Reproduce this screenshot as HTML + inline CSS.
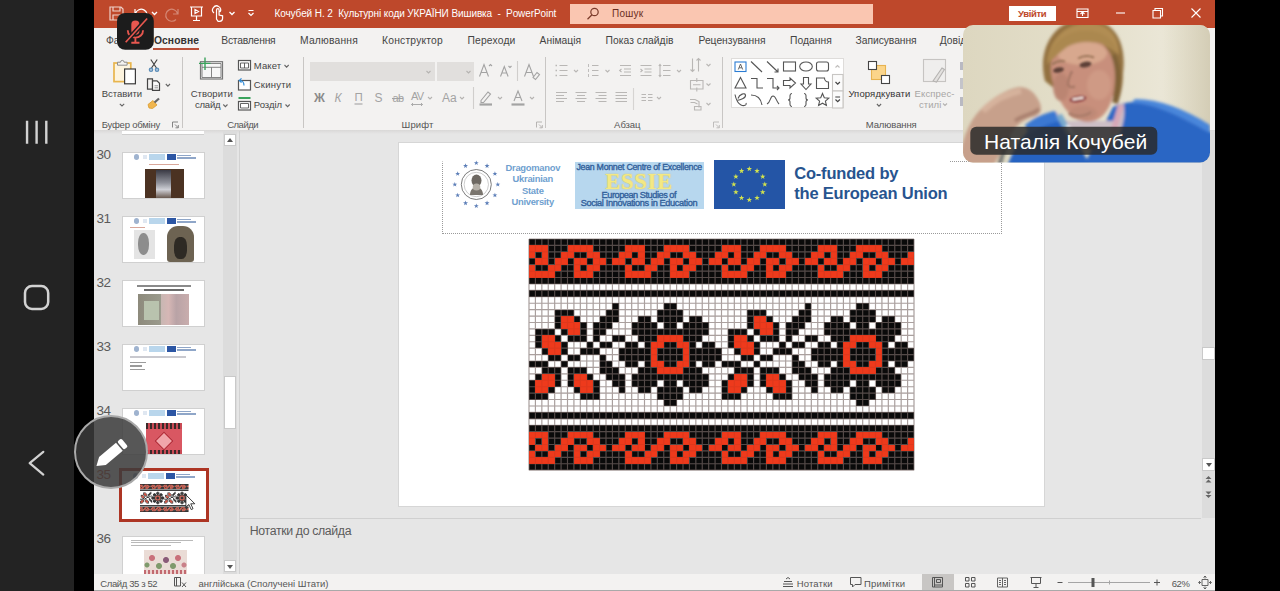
<!DOCTYPE html>
<html lang="uk">
<head>
<meta charset="utf-8">
<title>PowerPoint</title>
<style>
html,body{margin:0;padding:0}
body{width:1280px;height:591px;position:relative;overflow:hidden;background:#000;font-family:"Liberation Sans",sans-serif;font-size:11px;color:#444}
.a{position:absolute}
.t{position:absolute;white-space:nowrap;line-height:1}
svg{position:absolute;overflow:visible}
.sep{position:absolute;width:1px;background:#c8c6c4}
.gl{position:absolute;white-space:nowrap;line-height:1;font-size:9.5px;color:#555;top:120.1px}
.tab{position:absolute;white-space:nowrap;line-height:1;font-size:10.3px;color:#444;top:36.1px}
.num{position:absolute;white-space:nowrap;line-height:1;font-size:13.5px;letter-spacing:-.4px;color:#666;left:96.5px}
.th{position:absolute;left:122px;width:82.5px;height:47px;background:#fff;border:1px solid #d0d0d0;box-sizing:border-box;overflow:hidden}
.ch{position:absolute;width:5px;height:5px}
</style>
</head>
<body>
<!-- android nav bar -->
<div class="a" style="left:0;top:0;width:74px;height:591px;background:#232323"></div>
<svg style="left:0;top:0" width="74" height="591" viewBox="0 0 74 591" fill="none" stroke="#d2d2d2" stroke-width="2.2" stroke-linecap="round" stroke-linejoin="round">
<path d="M27.050 120.700V143.800M36.600 120.700V143.800M46.300 120.700V143.800" stroke-width="2.400" stroke-linecap="butt"/>
<rect x="25" y="286.1" width="23.2" height="22.8" rx="7" stroke-width="2.5"/>
<path d="M43.300 451.800L29.700 463.200L43.300 474.600"/>
</svg>
<!-- powerpoint window -->
<div class="a" style="left:94px;top:0;width:1121px;height:591px;background:#e6e6e6"></div>
<!-- title bar -->
<div class="a" style="left:94px;top:0;width:1121px;height:28px;background:#be482b"></div>
<div class="a" style="left:570px;top:4px;width:303px;height:20px;background:#fac6b1"></div>
<svg style="left:94px;top:0" width="1121" height="28" viewBox="94 0 1121 28" fill="none" stroke="#fff" stroke-width="1.2">
<!-- save -->
<path d="M110 7h11l2 2v11h-13zM113 7v4h7v-4M113 20v-5h7v5" opacity=".75"/>
<!-- undo -->
<path d="M135 9v5h5M135.500 13.500a6 6 0 1 1 1.500 6" />
<path d="M152 12l2.500 2.500l2.500-2.500" stroke-width="1.300"/>
<!-- redo (dim) -->
<path d="M178 9v5h-5M177.500 13.500a6 6 0 1 0-1.500 6" opacity=".35"/>
<!-- present -->
<path d="M190 7h13M191.500 7v9h10V7M196.500 16v4M193 20.500h7M195 9.500l3.500 2l-3.500 2z"/>
<!-- touch -->
<path d="M214 13a4 4 0 1 1 6-1M216.500 19v-9a1.300 1.300 0 0 1 2.600 0v5l3.500.8v2.500a3 3 0 0 1-3 3h-1.500z"/>
<path d="M229.500 12l2.500 2.500l2.500-2.500" stroke-width="1.300"/>
<!-- customize -->
<path d="M248.500 10.500h5M248.500 13l2.500 2.500l2.500-2.500" stroke-width="1.200"/>
<!-- search icon -->
<g stroke="#7a3a2a" stroke-width="1.200"><circle cx="594.500" cy="12" r="3.700"/><path d="M592 14.800l-4.500 4.400"/></g>
<!-- window controls -->
<path d="M1077 9h11v8.500h-11zM1077 11.500h11M1082.500 16v-3.500M1080.500 14l2-2l2 2" stroke-width="1.100"/>
<path d="M1116 13h9" stroke-width="1.100"/>
<path d="M1153 10.500h7.500v7.500H1153zM1155 10.500V8.500h7.500V16h-2" stroke-width="1.100"/>
<path d="M1191.500 8.500l9 9M1200.500 8.500l-9 9" stroke-width="1.100"/>
</svg>
<div class="t" style="left:274.5px;top:9px;font-size:10px;color:#fff;word-spacing:0px;letter-spacing:-0.092px" id="title">Кочубей Н. 2&nbsp; Культурні коди УКРАЇНИ Вишивка&nbsp; -&nbsp; PowerPoint</div>
<div class="t" style="left:612px;top:8.7px;font-size:10px;color:#6b2e22;letter-spacing:0.229px" id="search">Пошук</div>
<div class="a" style="left:1009px;top:6px;width:46.500px;height:15px;background:#fff"></div>
<div class="t" style="left:1018px;top:9px;font-size:9.5px;font-weight:bold;color:#be482b;letter-spacing:-0.363px" id="login">Увійти</div>
<!-- tabs + ribbon -->
<div class="a" style="left:94px;top:28px;width:1121px;height:102px;background:#f3f2f1"></div>
<div class="a" style="left:94px;top:130px;width:1121px;height:4px;background:linear-gradient(#d9d8d7,#e6e6e6)"></div>
<div class="tab" style="left:106px;letter-spacing:-0.082px" id="tb0">Файл</div>
<div class="tab" style="left:154px;font-weight:bold;color:#333;letter-spacing:0.067px" id="tb1">Основне</div>
<div class="a" style="left:153px;top:48px;width:46px;height:2px;background:#b9503a"></div>
<div class="tab" style="left:221.25px;letter-spacing:-0.202px" id="tb2">Вставлення</div>
<div class="tab" style="left:300px;letter-spacing:0.201px" id="tb3">Малювання</div>
<div class="tab" style="left:382px;letter-spacing:0.207px" id="tb4">Конструктор</div>
<div class="tab" style="left:467.5px;letter-spacing:0.168px" id="tb5">Переходи</div>
<div class="tab" style="left:539.5px;letter-spacing:0.041px" id="tb6">Анімація</div>
<div class="tab" style="left:605.5px;letter-spacing:0.042px" id="tb7">Показ слайдів</div>
<div class="tab" style="left:698.5px;letter-spacing:-0.010px" id="tb8">Рецензування</div>
<div class="tab" style="left:790px;letter-spacing:0.058px" id="tb9">Подання</div>
<div class="tab" style="left:855.6px;letter-spacing:-0.055px" id="tb10">Записування</div>
<div class="tab" style="left:939.8px;letter-spacing:-0.050px" id="tb11">Довідка</div>
<!-- clipboard group -->
<svg style="left:94px;top:53px" width="220" height="77" viewBox="94 53 220 77" fill="none" stroke-width="1.200">
<rect x="114" y="63" width="16.800" height="18.600" stroke="#e8b54d" stroke-width="1.700" fill="#fdf4df"/>
<path d="M117.500 65.200v-3h3a1.800 1.800 0 0 1 3.600 0h3v3z" stroke="#8f8f8f" fill="#f3f2f1" stroke-width="1"/>
<rect x="124.600" y="69" width="10.800" height="14.800" fill="#fff" stroke="#3b3b3b" stroke-width="1.200"/>
<path d="M119.800 103.800l2.200 2.200l2.200-2.200" stroke="#666" stroke-width="1.100"/>
<!-- scissors -->
<path d="M150.800 59.500l5.700 8.500M157.200 59.500l-5.700 8.500" stroke="#444"/>
<circle cx="151" cy="69.800" r="1.700" stroke="#5b8db8" fill="#a9c4dc"/><circle cx="157" cy="69.800" r="1.700" stroke="#5b8db8" fill="#a9c4dc"/>
<!-- copy -->
<path d="M147.500 78.800h5v10.300h-5z" stroke="#444" fill="#f3f2f1"/><path d="M152.500 80.800h4.500l2.500 2.500v7h-7z" stroke="#444" fill="#fbfbfb"/>
<path d="M154.500 85.800h3.500M154.500 87.800h3.500" stroke="#777" stroke-width=".8"/>
<path d="M165.800 84l2.100 2.100l2.100-2.100" stroke="#666" stroke-width="1.100"/>
<!-- format painter -->
<path d="M148 104.500l5-4l4 4.500l-4.500 3.500l-3.500-.5z" fill="#f0b64f" stroke="#d99a2b" stroke-width=".8"/>
<path d="M154.500 102.500l4.500-4" stroke="#666" stroke-width="2.200"/>
<!-- launcher -->
<path d="M172.500 127.500v-5.500h5.500M175 124.500l3 3M178.300 125v2.800h-2.800" stroke="#777" stroke-width=".9"/>
<!-- new slide -->
<rect x="200.500" y="61.700" width="22" height="17.300" stroke="#777" fill="#f7f7f7"/>
<path d="M202 63.500h19v14h-19zM202 67.300h19M211.500 67.300v10.200" stroke="#777" stroke-width=".9"/>
<path d="M205 57.500v12.500M199 63.400h11.500" stroke="#3aa35c" stroke-width="1.400"/>
<path d="M223.300 104.500l2.100 2.100l2.100-2.100" stroke="#666" stroke-width="1.100"/>
<!-- layout -->
<rect x="238.500" y="60.500" width="12" height="9.500" stroke="#555" fill="#fff"/>
<path d="M240.500 63h8v5h-8zM244.500 63v5" stroke="#555" stroke-width=".9"/>
<path d="M284.500 65l2.100 2.100l2.100-2.100" stroke="#666" stroke-width="1.100"/>
<!-- reset -->
<rect x="238.500" y="80.500" width="12" height="9.500" stroke="#555" fill="#fff"/>
<path d="M244 85.500c0-3.500-1.800-5-4.500-5M241.500 78.300l-2.200 2.200l2.200 2.200" stroke="#2f8bd8" stroke-width="1.200"/>
<!-- section -->
<path d="M238.500 98h12" stroke="#3aa35c" stroke-width="2"/>
<rect x="238.500" y="101.500" width="12" height="8.500" stroke="#555" fill="#fff"/>
<path d="M240.500 103.500h8v4.500h-8z" stroke="#555" stroke-width=".9"/>
<path d="M285.500 104.500l2.100 2.100l2.100-2.100" stroke="#666" stroke-width="1.100"/>
</svg>
<div class="t" style="left:101.7px;top:88.5px;font-size:9.5px;letter-spacing:-0.030px" id="r_paste">Вставити</div>
<div class="gl" style="left:101.7px;letter-spacing:-0.205px" id="g_clip">Буфер обміну</div>
<div class="sep" style="left:181.500px;top:57px;height:71px"></div>
<div class="t" style="left:190.7px;top:88.5px;font-size:9.5px;letter-spacing:0.052px" id="r_new1">Створити</div>
<div class="t" style="left:195px;top:100.3px;font-size:9.5px;letter-spacing:-0.227px" id="r_new2">слайд</div>
<div class="t" style="left:253.8px;top:61.1px;font-size:9.5px;letter-spacing:0.122px" id="r_lay">Макет</div>
<div class="t" style="left:253.8px;top:80.3px;font-size:9.5px;letter-spacing:0.217px" id="r_res">Скинути</div>
<div class="t" style="left:253.8px;top:100.3px;font-size:9.5px;letter-spacing:-0.026px" id="r_sec">Розділ</div>
<div class="gl" style="left:227.2px;letter-spacing:-0.491px" id="g_sl">Слайди</div>
<div class="sep" style="left:303px;top:57px;height:71px"></div>
<!-- font group -->
<div class="a" style="left:310px;top:62px;width:124.500px;height:19px;background:#e1dfdd"></div>
<div class="a" style="left:437px;top:62px;width:37px;height:19px;background:#e1dfdd"></div>
<svg style="left:304px;top:53px" width="420" height="77" viewBox="304 53 420 77" fill="none" stroke="#a3a3a3" stroke-width="1.100">
<path d="M426.500 71l2 2l2-2M466.500 71l2 2l2-2" stroke="#b5b3b1"/>
<!-- A^ Av -->
<path d="M479.500 76.500l4.500-12l4.500 12M481 72.500h6M489 66l1.500-1.500l1.500 1.500"/>
<path d="M500.500 76.500l3.800-10l3.800 10M501.800 73h5M508.500 66l1.500 1.500l1.500-1.500"/>
<path d="M517.500 61v20" stroke="#d0cecc"/>
<path d="M524.500 76.500l4.500-12l4.500 12M526 72.500h6M533 77.500l4-5l2.500 2l-4 5z"/>
<!-- underline for П -->
<path d="M354.500 104h8"/>
<!-- strike ab -->
<path d="M392 98.500h11"/>
<!-- AV arrows -->
<path d="M411.500 104.500h11M413 103l-1.500 1.500l1.500 1.500M421 103l1.500 1.500l-1.500 1.500" stroke-width=".9"/>
<path d="M428 97l2 2l2-2M460 97l2 2l2-2M498 97l2 2l2-2M530 97l2 2l2-2" stroke="#b5b3b1"/>
<path d="M473.500 87v22" stroke="#d0cecc"/>
<!-- highlighter -->
<path d="M481 100.500l7-8.500l2.500 2l-7 8.500h-2.500z"/>
<path d="M479.500 104.500h12.500" stroke-width="2.200"/>
<!-- font color A -->
<path d="M514 101l4-10l4 10M515.300 97.500h5.400"/>
<path d="M511.500 104.500h13" stroke-width="2.200"/>
<path d="M536.500 127.500v-5.500h5.500M539 124.500l3 3M542.300 125v2.800h-2.800" stroke="#b0aeac" stroke-width=".9"/>
<!-- paragraph: bullets -->
<g stroke="#b9b7b5">
<path d="M555.500 65.500h1.500M555.500 70.500h1.500M555.500 75.500h1.500" stroke-width="1.600"/>
<path d="M559.500 65.500h8M559.500 70.500h8M559.500 75.500h8"/>
<path d="M574 70l2 2l2-2"/>
<path d="M588.500 64v3M588.500 69v3M588.500 74v3" stroke-width=".9"/>
<path d="M592 65.500h6.500M592 70.500h6.500M592 75.500h6.500"/>
<path d="M605.500 70l2 2l2-2"/>
<path d="M620 65.500h11M624 69h7M624 72h7M620 75.500h11M621.500 69l-1.800 1.500l1.800 1.500"/>
<path d="M640.500 65.500h11M644.500 69h7M644.500 72h7M640.500 75.500h11M640.500 69l1.800 1.500l-1.800 1.500"/>
<path d="M663 65.500h7.500M663 70.500h7.500M663 75.500h7.500M660 64.500v12M658.800 66l1.200-1.500l1.200 1.500M658.800 75l1.200 1.500l1.200-1.500"/>
<path d="M677 70l2 2l2-2"/>
<!-- text direction -->
<path d="M692.500 58.500v13M690.500 69.500l2 2l2-2M698.500 71.500v-13M696.500 60.500l2-2l2 2"/>
<path d="M706.500 64l2 2l2-2M706.500 83.500l2 2l2-2M706.500 103l2 2l2-2"/>
<!-- align text -->
<path d="M690.500 80.500h12.500v8.500h-12.500zM696.800 78v4M696.800 87.500v4M693 84.800h7.500"/>
<!-- smartart -->
<path d="M690 99.500h5l4 2v6M690.500 102.500h4l3 1.500M694.500 106.500h6.500v3.500h-6.500z"/>
<!-- align row -->
<path d="M556 92.500h11M556 95.500h8M556 98.500h11M556 101.500h8"/>
<path d="M575.500 92.500h11M577 95.500h8M575.500 98.500h11M577 101.500h8"/>
<path d="M595.500 92.500h11M598.500 95.500h8M595.500 98.500h11M598.500 101.500h8"/>
<path d="M615.500 92.500h11.500M615.500 95.500h11.500M615.500 98.500h11.500M615.500 101.500h11.500"/>
<path d="M633.500 88v22" stroke="#d6d4d2"/>
<path d="M641.500 94.500h4.500M641.500 97.500h4.500M641.500 100.500h4.500M648 94.500h4.500M648 97.500h4.500M648 100.500h4.500"/>
<path d="M657 97l2 2l2-2"/>
<path d="M713.500 127.500v-5.500h5.500M716 124.500l3 3M719.300 125v2.800h-2.800" stroke-width=".9"/>
</g>
</svg>
<div class="t" style="left:314px;top:92px;font-size:12px;font-weight:bold;color:#8a8a8a">Ж</div>
<div class="t" style="left:334.500px;top:92px;font-size:12px;font-style:italic;color:#a3a3a3">К</div>
<div class="t" style="left:354.500px;top:92px;font-size:11.500px;color:#a3a3a3">П</div>
<div class="t" style="left:374.500px;top:92px;font-size:12px;color:#a3a3a3">S</div>
<div class="t" style="left:392.500px;top:93px;font-size:11px;color:#a3a3a3;letter-spacing:-.5px">ab</div>
<div class="t" style="left:411px;top:91px;font-size:11px;color:#a3a3a3;letter-spacing:-.8px">AV</div>
<div class="t" style="left:442px;top:92px;font-size:12px;color:#a3a3a3">Aa</div>
<div class="gl" style="left:401.6px;letter-spacing:0.127px" id="g_font">Шрифт</div>
<div class="sep" style="left:545px;top:57px;height:71px"></div>
<div class="gl" style="left:614.1px;letter-spacing:-0.051px" id="g_par">Абзац</div>
<div class="sep" style="left:722px;top:57px;height:71px"></div>
<!-- drawing group -->
<div class="a" style="left:731px;top:57.500px;width:112.500px;height:50.500px;background:#fff;border:1px solid #dedcda;box-sizing:border-box"></div>
<svg style="left:724px;top:53px" width="240" height="77" viewBox="724 53 240 77" fill="none" stroke="#555" stroke-width="1.100">
<!-- row1 -->
<rect x="735" y="62" width="11" height="9.500" stroke="#2b7cd3"/>
<path d="M738.300 69.500l2.200-5.500l2.200 5.500M739.200 67.800h2.600" stroke-width=".9"/>
<path d="M751 61.500l11 10.500"/>
<path d="M767 61.500l11 10.500M778 68.500v3.500h-3.500"/>
<rect x="783.500" y="62" width="12" height="9"/>
<ellipse cx="806" cy="66.500" rx="6.300" ry="4.500"/>
<rect x="816.500" y="62" width="12" height="9" rx="2"/>
<!-- row2 -->
<path d="M740.500 77.500l5.500 10.500h-11z"/>
<path d="M751 78.500h6v9.500h6"/>
<path d="M767 78.500h6v9.500h6M777 86l2 2l-2 2"/>
<path d="M783.500 80.500h6.500v-2.500l5.500 5l-5.500 5v-2.500h-6.500z"/>
<path d="M803.500 77.500h5v6.500h2.500l-5 5.500l-5-5.500h2.500z"/>
<path d="M816.500 78h8a4 4 0 0 0 4 4v6.500h-12z"/>
<!-- row3 -->
<path d="M735 94.500c1 5 3 9 6 10.500s6 0 5-2M736.500 100.500c5-.5 9.500-3 9-5.500s-6-1-7.500 3.500"/>
<path d="M751 95c6 0 10 4 11 10"/>
<path d="M767 104c4-2 3-8 6-8s3 5 6 8"/>
<path d="M792 93.500c-2.500 0-2 3-2 4.500s-1 2-2 2c1 0 2 .5 2 2s-.5 4.500 2 4.500"/>
<path d="M804 93.500c2.500 0 2 3 2 4.500s1 2 2 2c-1 0-2 .5-2 2s.5 4.500-2 4.500"/>
<path d="M822.500 93.500l1.800 4.200l4.500.4l-3.400 3l1 4.400l-3.900-2.300l-3.900 2.300l1-4.400l-3.400-3l4.500-.4z"/>
<!-- gallery scroll -->
<path d="M835.500 67.500l2-2l2 2" stroke="#c0bebc"/>
<rect x="832.500" y="74.500" width="10.500" height="16.500" stroke="#c8c6c4" fill="#fbfbfb"/>
<rect x="832.500" y="91" width="10.500" height="17" stroke="#c8c6c4" fill="#fbfbfb"/>
<path d="M835.500 82l2.200 2.200l2.200-2.200M835.500 99.500l2.200 2.200l2.200-2.200M835.300 97h4.800" stroke="#444" stroke-width="1.200"/>
<!-- arrange -->
<rect x="871.500" y="65.500" width="14" height="14" fill="#fbd58a" stroke="#e7b350"/>
<rect x="868.500" y="61.500" width="8" height="8" fill="#fff" stroke="#444"/>
<rect x="881.500" y="75.500" width="8" height="8" fill="#fff" stroke="#444"/>
<path d="M876.900 104l2.100 2.100l2.100-2.100" stroke="#666" stroke-width="1.100"/>
<!-- quick styles -->
<rect x="923.500" y="59.500" width="22" height="22" stroke="#c6c4c2" fill="#efeeed"/>
<path d="M933 81l9-13l2.500 1.500l-8 12.500z" stroke="#b5b3b1" fill="#e3e1df"/>
<path d="M943 103.500l2 2l2-2" stroke="#b5b3b1"/>
</svg>
<div class="t" style="left:848.4px;top:88.5px;font-size:9.5px;color:#333;letter-spacing:0.126px" id="r_arr">Упорядкувати</div>
<div class="t" style="left:914.6px;top:88.5px;font-size:9.5px;color:#a8a6a4;letter-spacing:0.127px" id="r_q1">Експрес-</div>
<div class="t" style="left:919px;top:100.3px;font-size:9.5px;color:#a8a6a4;letter-spacing:0.067px" id="r_q2">стилі</div>
<div class="a" style="left:959.500px;top:62px;width:4px;height:8px;background:#b9b9c2"></div><div class="a" style="left:960px;top:78px;width:4px;height:11px;background:#c4c4ca"></div><div class="a" style="left:959.500px;top:97px;width:4px;height:9px;background:#b9b9c2"></div>
<div class="gl" style="left:865.8px;letter-spacing:-0.116px" id="g_draw">Малювання</div>
<!-- thumbnail pane -->
<div class="a" style="left:239px;top:131px;width:1px;height:443px;background:#d2d2d2"></div>
<div class="a" style="left:222.500px;top:131px;width:14px;height:443px;background:#dcdcdc"></div>
<div class="a" style="left:122px;top:131px;width:82px;height:3px;background:#fff;border-bottom:1px solid #cfcfcf"></div>
<div class="num" style="top:148.0px;color:#5a5a5a">30</div>
<div class="num" style="top:212.0px;color:#5a5a5a">31</div>
<div class="num" style="top:276.0px;color:#5a5a5a">32</div>
<div class="num" style="top:340.0px;color:#5a5a5a">33</div>
<div class="num" style="top:404.0px;color:#5a5a5a">34</div>
<div class="num" style="top:468.0px;color:#b5482e">35</div>
<div class="num" style="top:532.0px;color:#5a5a5a">36</div>
<div class="th" style="top:151.5px;"><div class="a" style="left:11px;top:1.500px;width:5px;height:5.500px;border-radius:50%;background:#9fb3cf"></div><div class="a" style="left:19.500px;top:2px;width:4px;height:4.500px;background:#dfe7f1"></div><div class="a" style="left:26px;top:1px;width:15.500px;height:6px;background:#b9d6ec"></div><div class="a" style="left:43.500px;top:1px;width:9px;height:6px;background:#2c56a4"></div><div class="a" style="left:54px;top:2px;width:14px;height:1.500px;background:#8fa6c8"></div><div class="a" style="left:54px;top:4.500px;width:19px;height:1.500px;background:#8fa6c8"></div><div class="a" style="left:26px;top:11px;width:30px;height:1.500px;background:#d9a79a"></div><div class="a" style="left:21.500px;top:16.500px;width:39px;height:29px;background:#4b3222"></div><div class="a" style="left:33px;top:17px;width:15px;height:28px;background:linear-gradient(#3a3a44,#8d8f98 45%,#cfd0d6 70%,#6a5a50)"></div></div>
<div class="th" style="top:215.5px;"><div class="a" style="left:11px;top:1.500px;width:5px;height:5.500px;border-radius:50%;background:#9fb3cf"></div><div class="a" style="left:19.500px;top:2px;width:4px;height:4.500px;background:#dfe7f1"></div><div class="a" style="left:26px;top:1px;width:15.500px;height:6px;background:#b9d6ec"></div><div class="a" style="left:43.500px;top:1px;width:9px;height:6px;background:#2c56a4"></div><div class="a" style="left:54px;top:2px;width:14px;height:1.500px;background:#8fa6c8"></div><div class="a" style="left:54px;top:4.500px;width:19px;height:1.500px;background:#8fa6c8"></div><div class="a" style="left:7px;top:10px;width:15px;height:1.500px;background:#d9a79a"></div><div class="a" style="left:10.500px;top:13px;width:21px;height:29px;background:#e4e4e4"></div><div class="a" style="left:15px;top:16px;width:11px;height:22px;border-radius:45%;background:#8d8d8d"></div><div class="a" style="left:44px;top:9.500px;width:27px;height:36px;border-radius:11px 11px 3px 3px;background:#6d6352"></div><div class="a" style="left:51px;top:20px;width:13px;height:22px;border-radius:40%;background:#2e2a24"></div></div>
<div class="th" style="top:279.5px;"><div class="a" style="left:14px;top:4px;width:54px;height:2px;background:#8a8a8a"></div><div class="a" style="left:21px;top:8.500px;width:40px;height:2px;background:#6a6a6a"></div><div class="a" style="left:15px;top:13px;width:51px;height:31px;background:linear-gradient(90deg,#8d8a7c 0,#9a9a8c 44%,#c9b7b3 46%,#d6b7b5 60%,#b9a3a6 75%,#c9adad 100%)"></div><div class="a" style="left:21px;top:20px;width:15px;height:19px;background:#b9c3ae"></div></div>
<div class="th" style="top:343.5px;"><div class="a" style="left:11px;top:1.500px;width:5px;height:5.500px;border-radius:50%;background:#9fb3cf"></div><div class="a" style="left:19.500px;top:2px;width:4px;height:4.500px;background:#dfe7f1"></div><div class="a" style="left:26px;top:1px;width:15.500px;height:6px;background:#b9d6ec"></div><div class="a" style="left:43.500px;top:1px;width:9px;height:6px;background:#2c56a4"></div><div class="a" style="left:54px;top:2px;width:14px;height:1.500px;background:#8fa6c8"></div><div class="a" style="left:54px;top:4.500px;width:19px;height:1.500px;background:#8fa6c8"></div><div class="a" style="left:7px;top:11.500px;width:56px;height:1.500px;background:#c9c9cf"></div><div class="a" style="left:7px;top:17px;width:16px;height:1.500px;background:#9a9a9a"></div><div class="a" style="left:7px;top:20.500px;width:12px;height:1.500px;background:#9a9a9a"></div><div class="a" style="left:7px;top:24px;width:15px;height:1.500px;background:#9a9a9a"></div></div>
<div class="th" style="top:407.5px;"><div class="a" style="left:11px;top:1.500px;width:5px;height:5.500px;border-radius:50%;background:#9fb3cf"></div><div class="a" style="left:19.500px;top:2px;width:4px;height:4.500px;background:#dfe7f1"></div><div class="a" style="left:26px;top:1px;width:15.500px;height:6px;background:#b9d6ec"></div><div class="a" style="left:43.500px;top:1px;width:9px;height:6px;background:#2c56a4"></div><div class="a" style="left:54px;top:2px;width:14px;height:1.500px;background:#8fa6c8"></div><div class="a" style="left:54px;top:4.500px;width:19px;height:1.500px;background:#8fa6c8"></div><div class="a" style="left:22.500px;top:14px;width:36.500px;height:32px;background:#d95762"></div><div class="a" style="left:22.500px;top:14px;width:36.500px;height:6px;background:repeating-linear-gradient(90deg,#3a2a2a 0 2px,#c94a55 2px 4px)"></div><div class="a" style="left:31px;top:22px;width:20px;height:20px;transform:rotate(45deg) scale(.7);background:#f0a5aa;border:2px solid #b8303c;box-sizing:border-box"></div><div class="a" style="left:22.500px;top:41px;width:36.500px;height:5px;background:repeating-linear-gradient(90deg,#3a2a2a 0 2px,#c94a55 2px 4px)"></div></div>
<div class="a" style="left:119px;top:468.3px;width:90px;height:54px;border:3.5px solid #ad3524;box-sizing:border-box;background:#fff"></div><div class="th" style="top:471.500px;border:none"><div class="a" style="left:11px;top:1.500px;width:5px;height:5.500px;border-radius:50%;background:#9fb3cf"></div><div class="a" style="left:19.500px;top:2px;width:4px;height:4.500px;background:#dfe7f1"></div><div class="a" style="left:26px;top:1px;width:15.500px;height:6px;background:#b9d6ec"></div><div class="a" style="left:43.500px;top:1px;width:9px;height:6px;background:#2c56a4"></div><div class="a" style="left:54px;top:2px;width:14px;height:1.500px;background:#8fa6c8"></div><div class="a" style="left:54px;top:4.500px;width:19px;height:1.500px;background:#8fa6c8"></div></div><svg style="position:absolute;left:139.5px;top:484px" width="48.5" height="28" viewBox="0 0 60 36" preserveAspectRatio="none" shape-rendering="auto"><rect width="60" height="36" fill="#fff"/><rect x="0" y="0" width="60" height="1" fill="#0a0a0a"/><rect x="3" y="1" width="3" height="1" fill="#0a0a0a"/><rect x="10" y="1" width="5" height="1" fill="#0a0a0a"/><rect x="18" y="1" width="3" height="1" fill="#0a0a0a"/><rect x="25" y="1" width="5" height="1" fill="#0a0a0a"/><rect x="33" y="1" width="3" height="1" fill="#0a0a0a"/><rect x="40" y="1" width="5" height="1" fill="#0a0a0a"/><rect x="48" y="1" width="3" height="1" fill="#0a0a0a"/><rect x="55" y="1" width="5" height="1" fill="#0a0a0a"/><rect x="1" y="2" width="1" height="1" fill="#0a0a0a"/><rect x="3" y="2" width="2" height="1" fill="#0a0a0a"/><rect x="7" y="2" width="2" height="1" fill="#0a0a0a"/><rect x="11" y="2" width="3" height="1" fill="#0a0a0a"/><rect x="16" y="2" width="1" height="1" fill="#0a0a0a"/><rect x="18" y="2" width="2" height="1" fill="#0a0a0a"/><rect x="22" y="2" width="2" height="1" fill="#0a0a0a"/><rect x="26" y="2" width="3" height="1" fill="#0a0a0a"/><rect x="31" y="2" width="1" height="1" fill="#0a0a0a"/><rect x="33" y="2" width="2" height="1" fill="#0a0a0a"/><rect x="37" y="2" width="2" height="1" fill="#0a0a0a"/><rect x="41" y="2" width="3" height="1" fill="#0a0a0a"/><rect x="46" y="2" width="1" height="1" fill="#0a0a0a"/><rect x="48" y="2" width="2" height="1" fill="#0a0a0a"/><rect x="52" y="2" width="2" height="1" fill="#0a0a0a"/><rect x="56" y="2" width="3" height="1" fill="#0a0a0a"/><rect x="0" y="3" width="1" height="1" fill="#0a0a0a"/><rect x="3" y="3" width="1" height="1" fill="#0a0a0a"/><rect x="6" y="3" width="1" height="1" fill="#0a0a0a"/><rect x="9" y="3" width="1" height="1" fill="#0a0a0a"/><rect x="12" y="3" width="1" height="1" fill="#0a0a0a"/><rect x="15" y="3" width="1" height="1" fill="#0a0a0a"/><rect x="18" y="3" width="1" height="1" fill="#0a0a0a"/><rect x="21" y="3" width="1" height="1" fill="#0a0a0a"/><rect x="24" y="3" width="1" height="1" fill="#0a0a0a"/><rect x="27" y="3" width="1" height="1" fill="#0a0a0a"/><rect x="30" y="3" width="1" height="1" fill="#0a0a0a"/><rect x="33" y="3" width="1" height="1" fill="#0a0a0a"/><rect x="36" y="3" width="1" height="1" fill="#0a0a0a"/><rect x="39" y="3" width="1" height="1" fill="#0a0a0a"/><rect x="42" y="3" width="1" height="1" fill="#0a0a0a"/><rect x="45" y="3" width="1" height="1" fill="#0a0a0a"/><rect x="48" y="3" width="1" height="1" fill="#0a0a0a"/><rect x="51" y="3" width="1" height="1" fill="#0a0a0a"/><rect x="54" y="3" width="1" height="1" fill="#0a0a0a"/><rect x="57" y="3" width="1" height="1" fill="#0a0a0a"/><rect x="1" y="4" width="2" height="1" fill="#0a0a0a"/><rect x="5" y="4" width="2" height="1" fill="#0a0a0a"/><rect x="8" y="4" width="1" height="1" fill="#0a0a0a"/><rect x="11" y="4" width="4" height="1" fill="#0a0a0a"/><rect x="16" y="4" width="2" height="1" fill="#0a0a0a"/><rect x="20" y="4" width="2" height="1" fill="#0a0a0a"/><rect x="23" y="4" width="1" height="1" fill="#0a0a0a"/><rect x="26" y="4" width="4" height="1" fill="#0a0a0a"/><rect x="31" y="4" width="2" height="1" fill="#0a0a0a"/><rect x="35" y="4" width="2" height="1" fill="#0a0a0a"/><rect x="38" y="4" width="1" height="1" fill="#0a0a0a"/><rect x="41" y="4" width="4" height="1" fill="#0a0a0a"/><rect x="46" y="4" width="2" height="1" fill="#0a0a0a"/><rect x="50" y="4" width="2" height="1" fill="#0a0a0a"/><rect x="53" y="4" width="1" height="1" fill="#0a0a0a"/><rect x="56" y="4" width="4" height="1" fill="#0a0a0a"/><rect x="4" y="5" width="3" height="1" fill="#0a0a0a"/><rect x="10" y="5" width="5" height="1" fill="#0a0a0a"/><rect x="19" y="5" width="3" height="1" fill="#0a0a0a"/><rect x="25" y="5" width="5" height="1" fill="#0a0a0a"/><rect x="34" y="5" width="3" height="1" fill="#0a0a0a"/><rect x="40" y="5" width="5" height="1" fill="#0a0a0a"/><rect x="49" y="5" width="3" height="1" fill="#0a0a0a"/><rect x="55" y="5" width="5" height="1" fill="#0a0a0a"/><rect x="0" y="6" width="60" height="1" fill="#0a0a0a"/><rect x="0" y="8" width="60" height="1" fill="#0a0a0a"/><rect x="13" y="10" width="1" height="1" fill="#0a0a0a"/><rect x="21" y="10" width="2" height="1" fill="#0a0a0a"/><rect x="43" y="10" width="1" height="1" fill="#0a0a0a"/><rect x="51" y="10" width="2" height="1" fill="#0a0a0a"/><rect x="4" y="11" width="3" height="1" fill="#0a0a0a"/><rect x="12" y="11" width="2" height="1" fill="#0a0a0a"/><rect x="20" y="11" width="4" height="1" fill="#0a0a0a"/><rect x="34" y="11" width="3" height="1" fill="#0a0a0a"/><rect x="42" y="11" width="2" height="1" fill="#0a0a0a"/><rect x="50" y="11" width="4" height="1" fill="#0a0a0a"/><rect x="4" y="12" width="1" height="1" fill="#0a0a0a"/><rect x="7" y="12" width="1" height="1" fill="#0a0a0a"/><rect x="11" y="12" width="3" height="1" fill="#0a0a0a"/><rect x="17" y="12" width="2" height="1" fill="#0a0a0a"/><rect x="20" y="12" width="4" height="1" fill="#0a0a0a"/><rect x="25" y="12" width="2" height="1" fill="#0a0a0a"/><rect x="34" y="12" width="1" height="1" fill="#0a0a0a"/><rect x="37" y="12" width="1" height="1" fill="#0a0a0a"/><rect x="41" y="12" width="3" height="1" fill="#0a0a0a"/><rect x="47" y="12" width="2" height="1" fill="#0a0a0a"/><rect x="50" y="12" width="4" height="1" fill="#0a0a0a"/><rect x="55" y="12" width="2" height="1" fill="#0a0a0a"/><rect x="4" y="13" width="1" height="1" fill="#0a0a0a"/><rect x="8" y="13" width="1" height="1" fill="#0a0a0a"/><rect x="10" y="13" width="3" height="1" fill="#0a0a0a"/><rect x="16" y="13" width="4" height="1" fill="#0a0a0a"/><rect x="21" y="13" width="2" height="1" fill="#0a0a0a"/><rect x="24" y="13" width="4" height="1" fill="#0a0a0a"/><rect x="34" y="13" width="1" height="1" fill="#0a0a0a"/><rect x="38" y="13" width="1" height="1" fill="#0a0a0a"/><rect x="40" y="13" width="3" height="1" fill="#0a0a0a"/><rect x="46" y="13" width="4" height="1" fill="#0a0a0a"/><rect x="51" y="13" width="2" height="1" fill="#0a0a0a"/><rect x="54" y="13" width="4" height="1" fill="#0a0a0a"/><rect x="1" y="14" width="3" height="1" fill="#0a0a0a"/><rect x="5" y="14" width="1" height="1" fill="#0a0a0a"/><rect x="8" y="14" width="1" height="1" fill="#0a0a0a"/><rect x="10" y="14" width="2" height="1" fill="#0a0a0a"/><rect x="16" y="14" width="12" height="1" fill="#0a0a0a"/><rect x="31" y="14" width="3" height="1" fill="#0a0a0a"/><rect x="35" y="14" width="1" height="1" fill="#0a0a0a"/><rect x="38" y="14" width="1" height="1" fill="#0a0a0a"/><rect x="40" y="14" width="2" height="1" fill="#0a0a0a"/><rect x="46" y="14" width="12" height="1" fill="#0a0a0a"/><rect x="1" y="15" width="1" height="1" fill="#0a0a0a"/><rect x="4" y="15" width="1" height="1" fill="#0a0a0a"/><rect x="6" y="15" width="3" height="1" fill="#0a0a0a"/><rect x="10" y="15" width="1" height="1" fill="#0a0a0a"/><rect x="13" y="15" width="2" height="1" fill="#0a0a0a"/><rect x="17" y="15" width="3" height="1" fill="#0a0a0a"/><rect x="24" y="15" width="3" height="1" fill="#0a0a0a"/><rect x="31" y="15" width="1" height="1" fill="#0a0a0a"/><rect x="34" y="15" width="1" height="1" fill="#0a0a0a"/><rect x="36" y="15" width="3" height="1" fill="#0a0a0a"/><rect x="40" y="15" width="1" height="1" fill="#0a0a0a"/><rect x="43" y="15" width="2" height="1" fill="#0a0a0a"/><rect x="47" y="15" width="3" height="1" fill="#0a0a0a"/><rect x="54" y="15" width="3" height="1" fill="#0a0a0a"/><rect x="1" y="16" width="1" height="1" fill="#0a0a0a"/><rect x="5" y="16" width="1" height="1" fill="#0a0a0a"/><rect x="9" y="16" width="1" height="1" fill="#0a0a0a"/><rect x="11" y="16" width="2" height="1" fill="#0a0a0a"/><rect x="15" y="16" width="2" height="1" fill="#0a0a0a"/><rect x="18" y="16" width="1" height="1" fill="#0a0a0a"/><rect x="21" y="16" width="2" height="1" fill="#0a0a0a"/><rect x="25" y="16" width="1" height="1" fill="#0a0a0a"/><rect x="27" y="16" width="2" height="1" fill="#0a0a0a"/><rect x="31" y="16" width="1" height="1" fill="#0a0a0a"/><rect x="35" y="16" width="1" height="1" fill="#0a0a0a"/><rect x="39" y="16" width="1" height="1" fill="#0a0a0a"/><rect x="41" y="16" width="2" height="1" fill="#0a0a0a"/><rect x="45" y="16" width="2" height="1" fill="#0a0a0a"/><rect x="48" y="16" width="1" height="1" fill="#0a0a0a"/><rect x="51" y="16" width="2" height="1" fill="#0a0a0a"/><rect x="55" y="16" width="1" height="1" fill="#0a0a0a"/><rect x="57" y="16" width="2" height="1" fill="#0a0a0a"/><rect x="2" y="17" width="1" height="1" fill="#0a0a0a"/><rect x="5" y="17" width="1" height="1" fill="#0a0a0a"/><rect x="8" y="17" width="3" height="1" fill="#0a0a0a"/><rect x="14" y="17" width="5" height="1" fill="#0a0a0a"/><rect x="20" y="17" width="4" height="1" fill="#0a0a0a"/><rect x="25" y="17" width="5" height="1" fill="#0a0a0a"/><rect x="32" y="17" width="1" height="1" fill="#0a0a0a"/><rect x="35" y="17" width="1" height="1" fill="#0a0a0a"/><rect x="38" y="17" width="3" height="1" fill="#0a0a0a"/><rect x="44" y="17" width="5" height="1" fill="#0a0a0a"/><rect x="50" y="17" width="4" height="1" fill="#0a0a0a"/><rect x="55" y="17" width="5" height="1" fill="#0a0a0a"/><rect x="3" y="18" width="2" height="1" fill="#0a0a0a"/><rect x="6" y="18" width="2" height="1" fill="#0a0a0a"/><rect x="11" y="18" width="1" height="1" fill="#0a0a0a"/><rect x="14" y="18" width="5" height="1" fill="#0a0a0a"/><rect x="20" y="18" width="4" height="1" fill="#0a0a0a"/><rect x="25" y="18" width="5" height="1" fill="#0a0a0a"/><rect x="33" y="18" width="2" height="1" fill="#0a0a0a"/><rect x="36" y="18" width="2" height="1" fill="#0a0a0a"/><rect x="41" y="18" width="1" height="1" fill="#0a0a0a"/><rect x="44" y="18" width="5" height="1" fill="#0a0a0a"/><rect x="50" y="18" width="4" height="1" fill="#0a0a0a"/><rect x="55" y="18" width="5" height="1" fill="#0a0a0a"/><rect x="0" y="19" width="3" height="1" fill="#0a0a0a"/><rect x="5" y="19" width="1" height="1" fill="#0a0a0a"/><rect x="11" y="19" width="2" height="1" fill="#0a0a0a"/><rect x="15" y="19" width="2" height="1" fill="#0a0a0a"/><rect x="18" y="19" width="1" height="1" fill="#0a0a0a"/><rect x="21" y="19" width="2" height="1" fill="#0a0a0a"/><rect x="25" y="19" width="1" height="1" fill="#0a0a0a"/><rect x="27" y="19" width="2" height="1" fill="#0a0a0a"/><rect x="30" y="19" width="3" height="1" fill="#0a0a0a"/><rect x="35" y="19" width="1" height="1" fill="#0a0a0a"/><rect x="41" y="19" width="2" height="1" fill="#0a0a0a"/><rect x="45" y="19" width="2" height="1" fill="#0a0a0a"/><rect x="48" y="19" width="1" height="1" fill="#0a0a0a"/><rect x="51" y="19" width="2" height="1" fill="#0a0a0a"/><rect x="55" y="19" width="1" height="1" fill="#0a0a0a"/><rect x="57" y="19" width="2" height="1" fill="#0a0a0a"/><rect x="2" y="20" width="3" height="1" fill="#0a0a0a"/><rect x="6" y="20" width="3" height="1" fill="#0a0a0a"/><rect x="11" y="20" width="3" height="1" fill="#0a0a0a"/><rect x="17" y="20" width="3" height="1" fill="#0a0a0a"/><rect x="24" y="20" width="3" height="1" fill="#0a0a0a"/><rect x="32" y="20" width="3" height="1" fill="#0a0a0a"/><rect x="36" y="20" width="3" height="1" fill="#0a0a0a"/><rect x="41" y="20" width="3" height="1" fill="#0a0a0a"/><rect x="47" y="20" width="3" height="1" fill="#0a0a0a"/><rect x="54" y="20" width="3" height="1" fill="#0a0a0a"/><rect x="1" y="21" width="1" height="1" fill="#0a0a0a"/><rect x="4" y="21" width="1" height="1" fill="#0a0a0a"/><rect x="6" y="21" width="1" height="1" fill="#0a0a0a"/><rect x="9" y="21" width="1" height="1" fill="#0a0a0a"/><rect x="12" y="21" width="3" height="1" fill="#0a0a0a"/><rect x="16" y="21" width="12" height="1" fill="#0a0a0a"/><rect x="31" y="21" width="1" height="1" fill="#0a0a0a"/><rect x="34" y="21" width="1" height="1" fill="#0a0a0a"/><rect x="36" y="21" width="1" height="1" fill="#0a0a0a"/><rect x="39" y="21" width="1" height="1" fill="#0a0a0a"/><rect x="42" y="21" width="3" height="1" fill="#0a0a0a"/><rect x="46" y="21" width="12" height="1" fill="#0a0a0a"/><rect x="0" y="22" width="1" height="1" fill="#0a0a0a"/><rect x="4" y="22" width="1" height="1" fill="#0a0a0a"/><rect x="6" y="22" width="1" height="1" fill="#0a0a0a"/><rect x="10" y="22" width="1" height="1" fill="#0a0a0a"/><rect x="13" y="22" width="2" height="1" fill="#0a0a0a"/><rect x="16" y="22" width="4" height="1" fill="#0a0a0a"/><rect x="21" y="22" width="2" height="1" fill="#0a0a0a"/><rect x="24" y="22" width="4" height="1" fill="#0a0a0a"/><rect x="30" y="22" width="1" height="1" fill="#0a0a0a"/><rect x="34" y="22" width="1" height="1" fill="#0a0a0a"/><rect x="36" y="22" width="1" height="1" fill="#0a0a0a"/><rect x="40" y="22" width="1" height="1" fill="#0a0a0a"/><rect x="43" y="22" width="2" height="1" fill="#0a0a0a"/><rect x="46" y="22" width="4" height="1" fill="#0a0a0a"/><rect x="51" y="22" width="2" height="1" fill="#0a0a0a"/><rect x="54" y="22" width="4" height="1" fill="#0a0a0a"/><rect x="0" y="23" width="1" height="1" fill="#0a0a0a"/><rect x="3" y="23" width="1" height="1" fill="#0a0a0a"/><rect x="7" y="23" width="1" height="1" fill="#0a0a0a"/><rect x="10" y="23" width="1" height="1" fill="#0a0a0a"/><rect x="14" y="23" width="1" height="1" fill="#0a0a0a"/><rect x="17" y="23" width="2" height="1" fill="#0a0a0a"/><rect x="20" y="23" width="4" height="1" fill="#0a0a0a"/><rect x="25" y="23" width="2" height="1" fill="#0a0a0a"/><rect x="30" y="23" width="1" height="1" fill="#0a0a0a"/><rect x="33" y="23" width="1" height="1" fill="#0a0a0a"/><rect x="37" y="23" width="1" height="1" fill="#0a0a0a"/><rect x="40" y="23" width="1" height="1" fill="#0a0a0a"/><rect x="44" y="23" width="1" height="1" fill="#0a0a0a"/><rect x="47" y="23" width="2" height="1" fill="#0a0a0a"/><rect x="50" y="23" width="4" height="1" fill="#0a0a0a"/><rect x="55" y="23" width="2" height="1" fill="#0a0a0a"/><rect x="0" y="24" width="3" height="1" fill="#0a0a0a"/><rect x="8" y="24" width="3" height="1" fill="#0a0a0a"/><rect x="20" y="24" width="4" height="1" fill="#0a0a0a"/><rect x="30" y="24" width="3" height="1" fill="#0a0a0a"/><rect x="38" y="24" width="3" height="1" fill="#0a0a0a"/><rect x="50" y="24" width="4" height="1" fill="#0a0a0a"/><rect x="21" y="25" width="2" height="1" fill="#0a0a0a"/><rect x="51" y="25" width="2" height="1" fill="#0a0a0a"/><rect x="0" y="27" width="60" height="1" fill="#0a0a0a"/><rect x="0" y="29" width="60" height="1" fill="#0a0a0a"/><rect x="3" y="30" width="3" height="1" fill="#0a0a0a"/><rect x="10" y="30" width="5" height="1" fill="#0a0a0a"/><rect x="18" y="30" width="3" height="1" fill="#0a0a0a"/><rect x="25" y="30" width="5" height="1" fill="#0a0a0a"/><rect x="33" y="30" width="3" height="1" fill="#0a0a0a"/><rect x="40" y="30" width="5" height="1" fill="#0a0a0a"/><rect x="48" y="30" width="3" height="1" fill="#0a0a0a"/><rect x="55" y="30" width="5" height="1" fill="#0a0a0a"/><rect x="1" y="31" width="1" height="1" fill="#0a0a0a"/><rect x="3" y="31" width="2" height="1" fill="#0a0a0a"/><rect x="7" y="31" width="2" height="1" fill="#0a0a0a"/><rect x="11" y="31" width="3" height="1" fill="#0a0a0a"/><rect x="16" y="31" width="1" height="1" fill="#0a0a0a"/><rect x="18" y="31" width="2" height="1" fill="#0a0a0a"/><rect x="22" y="31" width="2" height="1" fill="#0a0a0a"/><rect x="26" y="31" width="3" height="1" fill="#0a0a0a"/><rect x="31" y="31" width="1" height="1" fill="#0a0a0a"/><rect x="33" y="31" width="2" height="1" fill="#0a0a0a"/><rect x="37" y="31" width="2" height="1" fill="#0a0a0a"/><rect x="41" y="31" width="3" height="1" fill="#0a0a0a"/><rect x="46" y="31" width="1" height="1" fill="#0a0a0a"/><rect x="48" y="31" width="2" height="1" fill="#0a0a0a"/><rect x="52" y="31" width="2" height="1" fill="#0a0a0a"/><rect x="56" y="31" width="3" height="1" fill="#0a0a0a"/><rect x="0" y="32" width="1" height="1" fill="#0a0a0a"/><rect x="3" y="32" width="1" height="1" fill="#0a0a0a"/><rect x="6" y="32" width="1" height="1" fill="#0a0a0a"/><rect x="9" y="32" width="1" height="1" fill="#0a0a0a"/><rect x="12" y="32" width="1" height="1" fill="#0a0a0a"/><rect x="15" y="32" width="1" height="1" fill="#0a0a0a"/><rect x="18" y="32" width="1" height="1" fill="#0a0a0a"/><rect x="21" y="32" width="1" height="1" fill="#0a0a0a"/><rect x="24" y="32" width="1" height="1" fill="#0a0a0a"/><rect x="27" y="32" width="1" height="1" fill="#0a0a0a"/><rect x="30" y="32" width="1" height="1" fill="#0a0a0a"/><rect x="33" y="32" width="1" height="1" fill="#0a0a0a"/><rect x="36" y="32" width="1" height="1" fill="#0a0a0a"/><rect x="39" y="32" width="1" height="1" fill="#0a0a0a"/><rect x="42" y="32" width="1" height="1" fill="#0a0a0a"/><rect x="45" y="32" width="1" height="1" fill="#0a0a0a"/><rect x="48" y="32" width="1" height="1" fill="#0a0a0a"/><rect x="51" y="32" width="1" height="1" fill="#0a0a0a"/><rect x="54" y="32" width="1" height="1" fill="#0a0a0a"/><rect x="57" y="32" width="1" height="1" fill="#0a0a0a"/><rect x="1" y="33" width="2" height="1" fill="#0a0a0a"/><rect x="5" y="33" width="2" height="1" fill="#0a0a0a"/><rect x="8" y="33" width="1" height="1" fill="#0a0a0a"/><rect x="11" y="33" width="4" height="1" fill="#0a0a0a"/><rect x="16" y="33" width="2" height="1" fill="#0a0a0a"/><rect x="20" y="33" width="2" height="1" fill="#0a0a0a"/><rect x="23" y="33" width="1" height="1" fill="#0a0a0a"/><rect x="26" y="33" width="4" height="1" fill="#0a0a0a"/><rect x="31" y="33" width="2" height="1" fill="#0a0a0a"/><rect x="35" y="33" width="2" height="1" fill="#0a0a0a"/><rect x="38" y="33" width="1" height="1" fill="#0a0a0a"/><rect x="41" y="33" width="4" height="1" fill="#0a0a0a"/><rect x="46" y="33" width="2" height="1" fill="#0a0a0a"/><rect x="50" y="33" width="2" height="1" fill="#0a0a0a"/><rect x="53" y="33" width="1" height="1" fill="#0a0a0a"/><rect x="56" y="33" width="4" height="1" fill="#0a0a0a"/><rect x="4" y="34" width="3" height="1" fill="#0a0a0a"/><rect x="10" y="34" width="5" height="1" fill="#0a0a0a"/><rect x="19" y="34" width="3" height="1" fill="#0a0a0a"/><rect x="25" y="34" width="5" height="1" fill="#0a0a0a"/><rect x="34" y="34" width="3" height="1" fill="#0a0a0a"/><rect x="40" y="34" width="5" height="1" fill="#0a0a0a"/><rect x="49" y="34" width="3" height="1" fill="#0a0a0a"/><rect x="55" y="34" width="5" height="1" fill="#0a0a0a"/><rect x="0" y="35" width="60" height="1" fill="#0a0a0a"/><rect x="0" y="1" width="3" height="1" fill="#c9301c"/><rect x="6" y="1" width="4" height="1" fill="#c9301c"/><rect x="15" y="1" width="3" height="1" fill="#c9301c"/><rect x="21" y="1" width="4" height="1" fill="#c9301c"/><rect x="30" y="1" width="3" height="1" fill="#c9301c"/><rect x="36" y="1" width="4" height="1" fill="#c9301c"/><rect x="45" y="1" width="3" height="1" fill="#c9301c"/><rect x="51" y="1" width="4" height="1" fill="#c9301c"/><rect x="0" y="2" width="1" height="1" fill="#c9301c"/><rect x="2" y="2" width="1" height="1" fill="#c9301c"/><rect x="5" y="2" width="2" height="1" fill="#c9301c"/><rect x="9" y="2" width="2" height="1" fill="#c9301c"/><rect x="14" y="2" width="2" height="1" fill="#c9301c"/><rect x="17" y="2" width="1" height="1" fill="#c9301c"/><rect x="20" y="2" width="2" height="1" fill="#c9301c"/><rect x="24" y="2" width="2" height="1" fill="#c9301c"/><rect x="29" y="2" width="2" height="1" fill="#c9301c"/><rect x="32" y="2" width="1" height="1" fill="#c9301c"/><rect x="35" y="2" width="2" height="1" fill="#c9301c"/><rect x="39" y="2" width="2" height="1" fill="#c9301c"/><rect x="44" y="2" width="2" height="1" fill="#c9301c"/><rect x="47" y="2" width="1" height="1" fill="#c9301c"/><rect x="50" y="2" width="2" height="1" fill="#c9301c"/><rect x="54" y="2" width="2" height="1" fill="#c9301c"/><rect x="59" y="2" width="1" height="1" fill="#c9301c"/><rect x="1" y="3" width="2" height="1" fill="#c9301c"/><rect x="4" y="3" width="2" height="1" fill="#c9301c"/><rect x="7" y="3" width="2" height="1" fill="#c9301c"/><rect x="10" y="3" width="2" height="1" fill="#c9301c"/><rect x="13" y="3" width="2" height="1" fill="#c9301c"/><rect x="16" y="3" width="2" height="1" fill="#c9301c"/><rect x="19" y="3" width="2" height="1" fill="#c9301c"/><rect x="22" y="3" width="2" height="1" fill="#c9301c"/><rect x="25" y="3" width="2" height="1" fill="#c9301c"/><rect x="28" y="3" width="2" height="1" fill="#c9301c"/><rect x="31" y="3" width="2" height="1" fill="#c9301c"/><rect x="34" y="3" width="2" height="1" fill="#c9301c"/><rect x="37" y="3" width="2" height="1" fill="#c9301c"/><rect x="40" y="3" width="2" height="1" fill="#c9301c"/><rect x="43" y="3" width="2" height="1" fill="#c9301c"/><rect x="46" y="3" width="2" height="1" fill="#c9301c"/><rect x="49" y="3" width="2" height="1" fill="#c9301c"/><rect x="52" y="3" width="2" height="1" fill="#c9301c"/><rect x="55" y="3" width="2" height="1" fill="#c9301c"/><rect x="58" y="3" width="2" height="1" fill="#c9301c"/><rect x="0" y="4" width="1" height="1" fill="#c9301c"/><rect x="3" y="4" width="2" height="1" fill="#c9301c"/><rect x="7" y="4" width="1" height="1" fill="#c9301c"/><rect x="9" y="4" width="2" height="1" fill="#c9301c"/><rect x="15" y="4" width="1" height="1" fill="#c9301c"/><rect x="18" y="4" width="2" height="1" fill="#c9301c"/><rect x="22" y="4" width="1" height="1" fill="#c9301c"/><rect x="24" y="4" width="2" height="1" fill="#c9301c"/><rect x="30" y="4" width="1" height="1" fill="#c9301c"/><rect x="33" y="4" width="2" height="1" fill="#c9301c"/><rect x="37" y="4" width="1" height="1" fill="#c9301c"/><rect x="39" y="4" width="2" height="1" fill="#c9301c"/><rect x="45" y="4" width="1" height="1" fill="#c9301c"/><rect x="48" y="4" width="2" height="1" fill="#c9301c"/><rect x="52" y="4" width="1" height="1" fill="#c9301c"/><rect x="54" y="4" width="2" height="1" fill="#c9301c"/><rect x="0" y="5" width="4" height="1" fill="#c9301c"/><rect x="7" y="5" width="3" height="1" fill="#c9301c"/><rect x="15" y="5" width="4" height="1" fill="#c9301c"/><rect x="22" y="5" width="3" height="1" fill="#c9301c"/><rect x="30" y="5" width="4" height="1" fill="#c9301c"/><rect x="37" y="5" width="3" height="1" fill="#c9301c"/><rect x="45" y="5" width="4" height="1" fill="#c9301c"/><rect x="52" y="5" width="3" height="1" fill="#c9301c"/><rect x="5" y="12" width="2" height="1" fill="#c9301c"/><rect x="35" y="12" width="2" height="1" fill="#c9301c"/><rect x="5" y="13" width="3" height="1" fill="#c9301c"/><rect x="35" y="13" width="3" height="1" fill="#c9301c"/><rect x="6" y="14" width="2" height="1" fill="#c9301c"/><rect x="36" y="14" width="2" height="1" fill="#c9301c"/><rect x="2" y="15" width="2" height="1" fill="#c9301c"/><rect x="20" y="15" width="4" height="1" fill="#c9301c"/><rect x="32" y="15" width="2" height="1" fill="#c9301c"/><rect x="50" y="15" width="4" height="1" fill="#c9301c"/><rect x="2" y="16" width="3" height="1" fill="#c9301c"/><rect x="19" y="16" width="2" height="1" fill="#c9301c"/><rect x="23" y="16" width="2" height="1" fill="#c9301c"/><rect x="32" y="16" width="3" height="1" fill="#c9301c"/><rect x="49" y="16" width="2" height="1" fill="#c9301c"/><rect x="53" y="16" width="2" height="1" fill="#c9301c"/><rect x="3" y="17" width="2" height="1" fill="#c9301c"/><rect x="19" y="17" width="1" height="1" fill="#c9301c"/><rect x="24" y="17" width="1" height="1" fill="#c9301c"/><rect x="33" y="17" width="2" height="1" fill="#c9301c"/><rect x="49" y="17" width="1" height="1" fill="#c9301c"/><rect x="54" y="17" width="1" height="1" fill="#c9301c"/><rect x="19" y="18" width="1" height="1" fill="#c9301c"/><rect x="24" y="18" width="1" height="1" fill="#c9301c"/><rect x="49" y="18" width="1" height="1" fill="#c9301c"/><rect x="54" y="18" width="1" height="1" fill="#c9301c"/><rect x="19" y="19" width="2" height="1" fill="#c9301c"/><rect x="23" y="19" width="2" height="1" fill="#c9301c"/><rect x="49" y="19" width="2" height="1" fill="#c9301c"/><rect x="53" y="19" width="2" height="1" fill="#c9301c"/><rect x="20" y="20" width="4" height="1" fill="#c9301c"/><rect x="50" y="20" width="4" height="1" fill="#c9301c"/><rect x="2" y="21" width="2" height="1" fill="#c9301c"/><rect x="7" y="21" width="2" height="1" fill="#c9301c"/><rect x="32" y="21" width="2" height="1" fill="#c9301c"/><rect x="37" y="21" width="2" height="1" fill="#c9301c"/><rect x="1" y="22" width="3" height="1" fill="#c9301c"/><rect x="7" y="22" width="3" height="1" fill="#c9301c"/><rect x="31" y="22" width="3" height="1" fill="#c9301c"/><rect x="37" y="22" width="3" height="1" fill="#c9301c"/><rect x="1" y="23" width="2" height="1" fill="#c9301c"/><rect x="8" y="23" width="2" height="1" fill="#c9301c"/><rect x="31" y="23" width="2" height="1" fill="#c9301c"/><rect x="38" y="23" width="2" height="1" fill="#c9301c"/><rect x="0" y="30" width="3" height="1" fill="#c9301c"/><rect x="6" y="30" width="4" height="1" fill="#c9301c"/><rect x="15" y="30" width="3" height="1" fill="#c9301c"/><rect x="21" y="30" width="4" height="1" fill="#c9301c"/><rect x="30" y="30" width="3" height="1" fill="#c9301c"/><rect x="36" y="30" width="4" height="1" fill="#c9301c"/><rect x="45" y="30" width="3" height="1" fill="#c9301c"/><rect x="51" y="30" width="4" height="1" fill="#c9301c"/><rect x="0" y="31" width="1" height="1" fill="#c9301c"/><rect x="2" y="31" width="1" height="1" fill="#c9301c"/><rect x="5" y="31" width="2" height="1" fill="#c9301c"/><rect x="9" y="31" width="2" height="1" fill="#c9301c"/><rect x="14" y="31" width="2" height="1" fill="#c9301c"/><rect x="17" y="31" width="1" height="1" fill="#c9301c"/><rect x="20" y="31" width="2" height="1" fill="#c9301c"/><rect x="24" y="31" width="2" height="1" fill="#c9301c"/><rect x="29" y="31" width="2" height="1" fill="#c9301c"/><rect x="32" y="31" width="1" height="1" fill="#c9301c"/><rect x="35" y="31" width="2" height="1" fill="#c9301c"/><rect x="39" y="31" width="2" height="1" fill="#c9301c"/><rect x="44" y="31" width="2" height="1" fill="#c9301c"/><rect x="47" y="31" width="1" height="1" fill="#c9301c"/><rect x="50" y="31" width="2" height="1" fill="#c9301c"/><rect x="54" y="31" width="2" height="1" fill="#c9301c"/><rect x="59" y="31" width="1" height="1" fill="#c9301c"/><rect x="1" y="32" width="2" height="1" fill="#c9301c"/><rect x="4" y="32" width="2" height="1" fill="#c9301c"/><rect x="7" y="32" width="2" height="1" fill="#c9301c"/><rect x="10" y="32" width="2" height="1" fill="#c9301c"/><rect x="13" y="32" width="2" height="1" fill="#c9301c"/><rect x="16" y="32" width="2" height="1" fill="#c9301c"/><rect x="19" y="32" width="2" height="1" fill="#c9301c"/><rect x="22" y="32" width="2" height="1" fill="#c9301c"/><rect x="25" y="32" width="2" height="1" fill="#c9301c"/><rect x="28" y="32" width="2" height="1" fill="#c9301c"/><rect x="31" y="32" width="2" height="1" fill="#c9301c"/><rect x="34" y="32" width="2" height="1" fill="#c9301c"/><rect x="37" y="32" width="2" height="1" fill="#c9301c"/><rect x="40" y="32" width="2" height="1" fill="#c9301c"/><rect x="43" y="32" width="2" height="1" fill="#c9301c"/><rect x="46" y="32" width="2" height="1" fill="#c9301c"/><rect x="49" y="32" width="2" height="1" fill="#c9301c"/><rect x="52" y="32" width="2" height="1" fill="#c9301c"/><rect x="55" y="32" width="2" height="1" fill="#c9301c"/><rect x="58" y="32" width="2" height="1" fill="#c9301c"/><rect x="0" y="33" width="1" height="1" fill="#c9301c"/><rect x="3" y="33" width="2" height="1" fill="#c9301c"/><rect x="7" y="33" width="1" height="1" fill="#c9301c"/><rect x="9" y="33" width="2" height="1" fill="#c9301c"/><rect x="15" y="33" width="1" height="1" fill="#c9301c"/><rect x="18" y="33" width="2" height="1" fill="#c9301c"/><rect x="22" y="33" width="1" height="1" fill="#c9301c"/><rect x="24" y="33" width="2" height="1" fill="#c9301c"/><rect x="30" y="33" width="1" height="1" fill="#c9301c"/><rect x="33" y="33" width="2" height="1" fill="#c9301c"/><rect x="37" y="33" width="1" height="1" fill="#c9301c"/><rect x="39" y="33" width="2" height="1" fill="#c9301c"/><rect x="45" y="33" width="1" height="1" fill="#c9301c"/><rect x="48" y="33" width="2" height="1" fill="#c9301c"/><rect x="52" y="33" width="1" height="1" fill="#c9301c"/><rect x="54" y="33" width="2" height="1" fill="#c9301c"/><rect x="0" y="34" width="4" height="1" fill="#c9301c"/><rect x="7" y="34" width="3" height="1" fill="#c9301c"/><rect x="15" y="34" width="4" height="1" fill="#c9301c"/><rect x="22" y="34" width="3" height="1" fill="#c9301c"/><rect x="30" y="34" width="4" height="1" fill="#c9301c"/><rect x="37" y="34" width="3" height="1" fill="#c9301c"/><rect x="45" y="34" width="4" height="1" fill="#c9301c"/><rect x="52" y="34" width="3" height="1" fill="#c9301c"/></svg>
<div class="th" style="top:535.5px;"><div class="a" style="left:8px;top:3px;width:62px;height:1.200px;background:#b9b9b9"></div><div class="a" style="left:8px;top:5.500px;width:50px;height:1.200px;background:#b9b9b9"></div><div class="a" style="left:8px;top:8.500px;width:40px;height:1.200px;background:#b9b9b9"></div><div class="a" style="left:21px;top:13px;width:43px;height:26px;background:#eadcd6"></div><div class="a" style="left:21px;top:13px;width:43px;height:26px;background:radial-gradient(circle at 8px 8px,#c9707a 0 2.5px,transparent 3.5px),radial-gradient(circle at 22px 10px,#8a5a78 0 2.5px,transparent 3.5px),radial-gradient(circle at 34px 8px,#c9707a 0 2.5px,transparent 3.5px),radial-gradient(circle at 15px 16px,#7f9a6c 0 2.5px,transparent 3.5px),radial-gradient(circle at 29px 16px,#7f9a6c 0 2.5px,transparent 3.5px),radial-gradient(circle at 40px 15px,#c98088 0 2px,transparent 3px),radial-gradient(circle at 3px 15px,#7f9a6c 0 2px,transparent 3px)"></div><div class="a" style="left:21px;top:33px;width:43px;height:6px;background:repeating-linear-gradient(90deg,#c26a70 0 2px,#ecd2cf 2px 4px)"></div></div>
<div class="a" style="left:223.500px;top:134px;width:12px;height:12px;background:#fff;border:1px solid #c9c9c9;box-sizing:border-box"></div>
<div class="a" style="left:226.500px;top:138px;width:0;height:0;border-left:3px solid transparent;border-right:3px solid transparent;border-bottom:4px solid #555"></div>
<div class="a" style="left:223.500px;top:375.500px;width:12px;height:53px;background:#fff;border:1px solid #c9c9c9;box-sizing:border-box"></div>
<div class="a" style="left:223.500px;top:560px;width:12px;height:12px;background:#fff;border:1px solid #c9c9c9;box-sizing:border-box"></div>
<div class="a" style="left:226.500px;top:564.500px;width:0;height:0;border-left:3px solid transparent;border-right:3px solid transparent;border-top:4px solid #555"></div>
<!-- slide -->
<div class="a" style="left:397.500px;top:141.500px;width:647px;height:365px;background:#fff;border:1px solid #d6d6d6;box-sizing:border-box"></div>
<div class="a" style="left:441.500px;top:160.500px;width:560px;height:73px;border:1px dotted #9a9a9a;border-top-color:transparent;box-sizing:border-box"></div>
<div class="a" style="left:950px;top:160.500px;width:51px;height:0;border-top:1px dotted #9a9a9a"></div>
<!-- logo 1 -->
<svg style="left:450px;top:160px" width="54" height="50" viewBox="450 160 54 50">
<g fill="#5d7fb8" id="stars"></g>
<circle cx="476.300" cy="184.500" r="15" fill="#fff" stroke="#5a5a5a" stroke-width=".8"/>
<circle cx="476.300" cy="184.500" r="12.200" fill="none" stroke="#9a9a9a" stroke-width=".5"/>
<ellipse cx="476.500" cy="180.500" rx="5" ry="6" fill="#6d6862"/>
<path d="M470 195c0-5 3-8 6.500-8s6.500 3 6.500 8z" fill="#7a756e"/>
<ellipse cx="476.500" cy="187" rx="3.800" ry="3.500" fill="#b5b0a8"/>
<g fill="#5d7fb8"><polygon points="476.30,160.40 476.91,162.16 478.77,162.20 477.29,163.32 477.83,165.10 476.30,164.04 474.77,165.10 475.31,163.32 473.83,162.20 475.69,162.16"/><polygon points="487.05,163.28 487.66,165.04 489.52,165.08 488.04,166.20 488.58,167.98 487.05,166.92 485.52,167.98 486.06,166.20 484.58,165.08 486.44,165.04"/><polygon points="494.92,171.15 495.53,172.91 497.39,172.95 495.91,174.07 496.45,175.85 494.92,174.79 493.39,175.85 493.93,174.07 492.45,172.95 494.31,172.91"/><polygon points="497.80,181.90 498.41,183.66 500.27,183.70 498.79,184.82 499.33,186.60 497.80,185.54 496.27,186.60 496.81,184.82 495.33,183.70 497.19,183.66"/><polygon points="494.92,192.65 495.53,194.41 497.39,194.45 495.91,195.57 496.45,197.35 494.92,196.29 493.39,197.35 493.93,195.57 492.45,194.45 494.31,194.41"/><polygon points="487.05,200.52 487.66,202.28 489.52,202.32 488.04,203.44 488.58,205.22 487.05,204.16 485.52,205.22 486.06,203.44 484.58,202.32 486.44,202.28"/><polygon points="476.30,203.40 476.91,205.16 478.77,205.20 477.29,206.32 477.83,208.10 476.30,207.04 474.77,208.10 475.31,206.32 473.83,205.20 475.69,205.16"/><polygon points="465.55,200.52 466.16,202.28 468.02,202.32 466.54,203.44 467.08,205.22 465.55,204.16 464.02,205.22 464.56,203.44 463.08,202.32 464.94,202.28"/><polygon points="457.68,192.65 458.29,194.41 460.15,194.45 458.67,195.57 459.21,197.35 457.68,196.29 456.15,197.35 456.69,195.57 455.21,194.45 457.07,194.41"/><polygon points="454.80,181.90 455.41,183.66 457.27,183.70 455.79,184.82 456.33,186.60 454.80,185.54 453.27,186.60 453.81,184.82 452.33,183.70 454.19,183.66"/><polygon points="457.68,171.15 458.29,172.91 460.15,172.95 458.67,174.07 459.21,175.85 457.68,174.79 456.15,175.85 456.69,174.07 455.21,172.95 457.07,172.91"/><polygon points="465.55,163.28 466.16,165.04 468.02,165.08 466.54,166.20 467.08,167.98 465.55,166.92 464.02,167.98 464.56,166.20 463.08,165.08 464.94,165.04"/></g>
</svg>
<div class="t" style="left:505.5px;top:163px;font-size:9.4px;font-weight:bold;color:#6f9fcf;letter-spacing:-0.271px" id="dr0">Dragomanov</div><div class="t" style="left:512.5px;top:174.4px;font-size:9.4px;font-weight:bold;color:#6f9fcf;letter-spacing:-0.248px" id="dr1">Ukrainian</div><div class="t" style="left:521.9px;top:185.7px;font-size:9.4px;font-weight:bold;color:#6f9fcf;letter-spacing:-0.227px" id="dr2">State</div><div class="t" style="left:511.6px;top:197.4px;font-size:9.4px;font-weight:bold;color:#6f9fcf;letter-spacing:-0.314px" id="dr3">University</div>
<!-- essie -->
<div class="a" style="left:574.500px;top:161.500px;width:129px;height:47px;background:#b7d7ee"></div>
<div class="t" style="left:576.5px;top:163px;font-size:8.8px;color:#31609b;-webkit-text-stroke:.35px #31609b;letter-spacing:-0.284px" id="es1">Jean Monnet Centre of Excellence</div>
<div class="t" style="left:605.3px;top:170.8px;font-size:22.5px;font-weight:bold;color:#f3e884;font-family:'Liberation Serif',serif;text-shadow:0 0 1.5px #d9c24a;letter-spacing:0.697px" id="es2">ESSIE</div>
<div class="t" style="left:601.6px;top:191.1px;font-size:9.2px;color:#31609b;-webkit-text-stroke:.35px #31609b;letter-spacing:-0.461px" id="es3">European Studies of</div>
<div class="t" style="left:580.7px;top:199.3px;font-size:9.2px;color:#31609b;-webkit-text-stroke:.35px #31609b;letter-spacing:-0.361px" id="es4">Social Innovations in Education</div>
<!-- EU flag -->
<div class="a" style="left:714px;top:160px;width:71px;height:48.500px;background:#2455a6"></div>
<svg style="left:714px;top:160px" width="71" height="49" viewBox="714 160 71 49"><g fill="#d2e24e"><polygon points="749.30,166.00 749.98,167.96 752.06,168.00 750.40,169.26 751.00,171.25 749.30,170.06 747.60,171.25 748.20,169.26 746.54,168.00 748.62,167.96"/><polygon points="757.05,168.08 757.73,170.04 759.81,170.08 758.15,171.34 758.75,173.32 757.05,172.14 755.35,173.32 755.95,171.34 754.29,170.08 756.37,170.04"/><polygon points="762.72,173.75 763.41,175.71 765.48,175.75 763.83,177.01 764.43,179.00 762.72,177.81 761.02,179.00 761.62,177.01 759.97,175.75 762.04,175.71"/><polygon points="764.80,181.50 765.48,183.46 767.56,183.50 765.90,184.76 766.50,186.75 764.80,185.56 763.10,186.75 763.70,184.76 762.04,183.50 764.12,183.46"/><polygon points="762.72,189.25 763.41,191.21 765.48,191.25 763.83,192.51 764.43,194.50 762.72,193.31 761.02,194.50 761.62,192.51 759.97,191.25 762.04,191.21"/><polygon points="757.05,194.92 757.73,196.88 759.81,196.93 758.15,198.18 758.75,200.17 757.05,198.98 755.35,200.17 755.95,198.18 754.29,196.93 756.37,196.88"/><polygon points="749.30,197.00 749.98,198.96 752.06,199.00 750.40,200.26 751.00,202.25 749.30,201.06 747.60,202.25 748.20,200.26 746.54,199.00 748.62,198.96"/><polygon points="741.55,194.92 742.23,196.88 744.31,196.93 742.65,198.18 743.25,200.17 741.55,198.98 739.85,200.17 740.45,198.18 738.79,196.93 740.87,196.88"/><polygon points="735.88,189.25 736.56,191.21 738.63,191.25 736.98,192.51 737.58,194.50 735.88,193.31 734.17,194.50 734.77,192.51 733.12,191.25 735.19,191.21"/><polygon points="733.80,181.50 734.48,183.46 736.56,183.50 734.90,184.76 735.50,186.75 733.80,185.56 732.10,186.75 732.70,184.76 731.04,183.50 733.12,183.46"/><polygon points="735.88,173.75 736.56,175.71 738.63,175.75 736.98,177.01 737.58,179.00 735.88,177.81 734.17,179.00 734.77,177.01 733.12,175.75 735.19,175.71"/><polygon points="741.55,168.08 742.23,170.04 744.31,170.08 742.65,171.34 743.25,173.32 741.55,172.14 739.85,173.32 740.45,171.34 738.79,170.08 740.87,170.04"/></g></svg>
<div class="t" style="left:794.2px;top:164.500px;font-size:16.500px;font-weight:bold;color:#27548f;letter-spacing:-0.186px" id="eu1">Co-funded by</div>
<div class="t" style="left:794.2px;top:185px;font-size:16.500px;font-weight:bold;color:#27548f;letter-spacing:-0.192px" id="eu2">the European Union</div>
<svg style="position:absolute;left:528.7px;top:239px" width="385" height="231.2" viewBox="0 0 60 36" preserveAspectRatio="none" shape-rendering="crispEdges"><rect width="60" height="36" fill="#fff"/><rect x="0" y="0" width="60" height="1" fill="#0a0a0a"/><rect x="3" y="1" width="3" height="1" fill="#0a0a0a"/><rect x="10" y="1" width="5" height="1" fill="#0a0a0a"/><rect x="18" y="1" width="3" height="1" fill="#0a0a0a"/><rect x="25" y="1" width="5" height="1" fill="#0a0a0a"/><rect x="33" y="1" width="3" height="1" fill="#0a0a0a"/><rect x="40" y="1" width="5" height="1" fill="#0a0a0a"/><rect x="48" y="1" width="3" height="1" fill="#0a0a0a"/><rect x="55" y="1" width="5" height="1" fill="#0a0a0a"/><rect x="1" y="2" width="1" height="1" fill="#0a0a0a"/><rect x="3" y="2" width="2" height="1" fill="#0a0a0a"/><rect x="7" y="2" width="2" height="1" fill="#0a0a0a"/><rect x="11" y="2" width="3" height="1" fill="#0a0a0a"/><rect x="16" y="2" width="1" height="1" fill="#0a0a0a"/><rect x="18" y="2" width="2" height="1" fill="#0a0a0a"/><rect x="22" y="2" width="2" height="1" fill="#0a0a0a"/><rect x="26" y="2" width="3" height="1" fill="#0a0a0a"/><rect x="31" y="2" width="1" height="1" fill="#0a0a0a"/><rect x="33" y="2" width="2" height="1" fill="#0a0a0a"/><rect x="37" y="2" width="2" height="1" fill="#0a0a0a"/><rect x="41" y="2" width="3" height="1" fill="#0a0a0a"/><rect x="46" y="2" width="1" height="1" fill="#0a0a0a"/><rect x="48" y="2" width="2" height="1" fill="#0a0a0a"/><rect x="52" y="2" width="2" height="1" fill="#0a0a0a"/><rect x="56" y="2" width="3" height="1" fill="#0a0a0a"/><rect x="0" y="3" width="1" height="1" fill="#0a0a0a"/><rect x="3" y="3" width="1" height="1" fill="#0a0a0a"/><rect x="6" y="3" width="1" height="1" fill="#0a0a0a"/><rect x="9" y="3" width="1" height="1" fill="#0a0a0a"/><rect x="12" y="3" width="1" height="1" fill="#0a0a0a"/><rect x="15" y="3" width="1" height="1" fill="#0a0a0a"/><rect x="18" y="3" width="1" height="1" fill="#0a0a0a"/><rect x="21" y="3" width="1" height="1" fill="#0a0a0a"/><rect x="24" y="3" width="1" height="1" fill="#0a0a0a"/><rect x="27" y="3" width="1" height="1" fill="#0a0a0a"/><rect x="30" y="3" width="1" height="1" fill="#0a0a0a"/><rect x="33" y="3" width="1" height="1" fill="#0a0a0a"/><rect x="36" y="3" width="1" height="1" fill="#0a0a0a"/><rect x="39" y="3" width="1" height="1" fill="#0a0a0a"/><rect x="42" y="3" width="1" height="1" fill="#0a0a0a"/><rect x="45" y="3" width="1" height="1" fill="#0a0a0a"/><rect x="48" y="3" width="1" height="1" fill="#0a0a0a"/><rect x="51" y="3" width="1" height="1" fill="#0a0a0a"/><rect x="54" y="3" width="1" height="1" fill="#0a0a0a"/><rect x="57" y="3" width="1" height="1" fill="#0a0a0a"/><rect x="1" y="4" width="2" height="1" fill="#0a0a0a"/><rect x="5" y="4" width="2" height="1" fill="#0a0a0a"/><rect x="8" y="4" width="1" height="1" fill="#0a0a0a"/><rect x="11" y="4" width="4" height="1" fill="#0a0a0a"/><rect x="16" y="4" width="2" height="1" fill="#0a0a0a"/><rect x="20" y="4" width="2" height="1" fill="#0a0a0a"/><rect x="23" y="4" width="1" height="1" fill="#0a0a0a"/><rect x="26" y="4" width="4" height="1" fill="#0a0a0a"/><rect x="31" y="4" width="2" height="1" fill="#0a0a0a"/><rect x="35" y="4" width="2" height="1" fill="#0a0a0a"/><rect x="38" y="4" width="1" height="1" fill="#0a0a0a"/><rect x="41" y="4" width="4" height="1" fill="#0a0a0a"/><rect x="46" y="4" width="2" height="1" fill="#0a0a0a"/><rect x="50" y="4" width="2" height="1" fill="#0a0a0a"/><rect x="53" y="4" width="1" height="1" fill="#0a0a0a"/><rect x="56" y="4" width="4" height="1" fill="#0a0a0a"/><rect x="4" y="5" width="3" height="1" fill="#0a0a0a"/><rect x="10" y="5" width="5" height="1" fill="#0a0a0a"/><rect x="19" y="5" width="3" height="1" fill="#0a0a0a"/><rect x="25" y="5" width="5" height="1" fill="#0a0a0a"/><rect x="34" y="5" width="3" height="1" fill="#0a0a0a"/><rect x="40" y="5" width="5" height="1" fill="#0a0a0a"/><rect x="49" y="5" width="3" height="1" fill="#0a0a0a"/><rect x="55" y="5" width="5" height="1" fill="#0a0a0a"/><rect x="0" y="6" width="60" height="1" fill="#0a0a0a"/><rect x="0" y="8" width="60" height="1" fill="#0a0a0a"/><rect x="13" y="10" width="1" height="1" fill="#0a0a0a"/><rect x="21" y="10" width="2" height="1" fill="#0a0a0a"/><rect x="43" y="10" width="1" height="1" fill="#0a0a0a"/><rect x="51" y="10" width="2" height="1" fill="#0a0a0a"/><rect x="4" y="11" width="3" height="1" fill="#0a0a0a"/><rect x="12" y="11" width="2" height="1" fill="#0a0a0a"/><rect x="20" y="11" width="4" height="1" fill="#0a0a0a"/><rect x="34" y="11" width="3" height="1" fill="#0a0a0a"/><rect x="42" y="11" width="2" height="1" fill="#0a0a0a"/><rect x="50" y="11" width="4" height="1" fill="#0a0a0a"/><rect x="4" y="12" width="1" height="1" fill="#0a0a0a"/><rect x="7" y="12" width="1" height="1" fill="#0a0a0a"/><rect x="11" y="12" width="3" height="1" fill="#0a0a0a"/><rect x="17" y="12" width="2" height="1" fill="#0a0a0a"/><rect x="20" y="12" width="4" height="1" fill="#0a0a0a"/><rect x="25" y="12" width="2" height="1" fill="#0a0a0a"/><rect x="34" y="12" width="1" height="1" fill="#0a0a0a"/><rect x="37" y="12" width="1" height="1" fill="#0a0a0a"/><rect x="41" y="12" width="3" height="1" fill="#0a0a0a"/><rect x="47" y="12" width="2" height="1" fill="#0a0a0a"/><rect x="50" y="12" width="4" height="1" fill="#0a0a0a"/><rect x="55" y="12" width="2" height="1" fill="#0a0a0a"/><rect x="4" y="13" width="1" height="1" fill="#0a0a0a"/><rect x="8" y="13" width="1" height="1" fill="#0a0a0a"/><rect x="10" y="13" width="3" height="1" fill="#0a0a0a"/><rect x="16" y="13" width="4" height="1" fill="#0a0a0a"/><rect x="21" y="13" width="2" height="1" fill="#0a0a0a"/><rect x="24" y="13" width="4" height="1" fill="#0a0a0a"/><rect x="34" y="13" width="1" height="1" fill="#0a0a0a"/><rect x="38" y="13" width="1" height="1" fill="#0a0a0a"/><rect x="40" y="13" width="3" height="1" fill="#0a0a0a"/><rect x="46" y="13" width="4" height="1" fill="#0a0a0a"/><rect x="51" y="13" width="2" height="1" fill="#0a0a0a"/><rect x="54" y="13" width="4" height="1" fill="#0a0a0a"/><rect x="1" y="14" width="3" height="1" fill="#0a0a0a"/><rect x="5" y="14" width="1" height="1" fill="#0a0a0a"/><rect x="8" y="14" width="1" height="1" fill="#0a0a0a"/><rect x="10" y="14" width="2" height="1" fill="#0a0a0a"/><rect x="16" y="14" width="12" height="1" fill="#0a0a0a"/><rect x="31" y="14" width="3" height="1" fill="#0a0a0a"/><rect x="35" y="14" width="1" height="1" fill="#0a0a0a"/><rect x="38" y="14" width="1" height="1" fill="#0a0a0a"/><rect x="40" y="14" width="2" height="1" fill="#0a0a0a"/><rect x="46" y="14" width="12" height="1" fill="#0a0a0a"/><rect x="1" y="15" width="1" height="1" fill="#0a0a0a"/><rect x="4" y="15" width="1" height="1" fill="#0a0a0a"/><rect x="6" y="15" width="3" height="1" fill="#0a0a0a"/><rect x="10" y="15" width="1" height="1" fill="#0a0a0a"/><rect x="13" y="15" width="2" height="1" fill="#0a0a0a"/><rect x="17" y="15" width="3" height="1" fill="#0a0a0a"/><rect x="24" y="15" width="3" height="1" fill="#0a0a0a"/><rect x="31" y="15" width="1" height="1" fill="#0a0a0a"/><rect x="34" y="15" width="1" height="1" fill="#0a0a0a"/><rect x="36" y="15" width="3" height="1" fill="#0a0a0a"/><rect x="40" y="15" width="1" height="1" fill="#0a0a0a"/><rect x="43" y="15" width="2" height="1" fill="#0a0a0a"/><rect x="47" y="15" width="3" height="1" fill="#0a0a0a"/><rect x="54" y="15" width="3" height="1" fill="#0a0a0a"/><rect x="1" y="16" width="1" height="1" fill="#0a0a0a"/><rect x="5" y="16" width="1" height="1" fill="#0a0a0a"/><rect x="9" y="16" width="1" height="1" fill="#0a0a0a"/><rect x="11" y="16" width="2" height="1" fill="#0a0a0a"/><rect x="15" y="16" width="2" height="1" fill="#0a0a0a"/><rect x="18" y="16" width="1" height="1" fill="#0a0a0a"/><rect x="21" y="16" width="2" height="1" fill="#0a0a0a"/><rect x="25" y="16" width="1" height="1" fill="#0a0a0a"/><rect x="27" y="16" width="2" height="1" fill="#0a0a0a"/><rect x="31" y="16" width="1" height="1" fill="#0a0a0a"/><rect x="35" y="16" width="1" height="1" fill="#0a0a0a"/><rect x="39" y="16" width="1" height="1" fill="#0a0a0a"/><rect x="41" y="16" width="2" height="1" fill="#0a0a0a"/><rect x="45" y="16" width="2" height="1" fill="#0a0a0a"/><rect x="48" y="16" width="1" height="1" fill="#0a0a0a"/><rect x="51" y="16" width="2" height="1" fill="#0a0a0a"/><rect x="55" y="16" width="1" height="1" fill="#0a0a0a"/><rect x="57" y="16" width="2" height="1" fill="#0a0a0a"/><rect x="2" y="17" width="1" height="1" fill="#0a0a0a"/><rect x="5" y="17" width="1" height="1" fill="#0a0a0a"/><rect x="8" y="17" width="3" height="1" fill="#0a0a0a"/><rect x="14" y="17" width="5" height="1" fill="#0a0a0a"/><rect x="20" y="17" width="4" height="1" fill="#0a0a0a"/><rect x="25" y="17" width="5" height="1" fill="#0a0a0a"/><rect x="32" y="17" width="1" height="1" fill="#0a0a0a"/><rect x="35" y="17" width="1" height="1" fill="#0a0a0a"/><rect x="38" y="17" width="3" height="1" fill="#0a0a0a"/><rect x="44" y="17" width="5" height="1" fill="#0a0a0a"/><rect x="50" y="17" width="4" height="1" fill="#0a0a0a"/><rect x="55" y="17" width="5" height="1" fill="#0a0a0a"/><rect x="3" y="18" width="2" height="1" fill="#0a0a0a"/><rect x="6" y="18" width="2" height="1" fill="#0a0a0a"/><rect x="11" y="18" width="1" height="1" fill="#0a0a0a"/><rect x="14" y="18" width="5" height="1" fill="#0a0a0a"/><rect x="20" y="18" width="4" height="1" fill="#0a0a0a"/><rect x="25" y="18" width="5" height="1" fill="#0a0a0a"/><rect x="33" y="18" width="2" height="1" fill="#0a0a0a"/><rect x="36" y="18" width="2" height="1" fill="#0a0a0a"/><rect x="41" y="18" width="1" height="1" fill="#0a0a0a"/><rect x="44" y="18" width="5" height="1" fill="#0a0a0a"/><rect x="50" y="18" width="4" height="1" fill="#0a0a0a"/><rect x="55" y="18" width="5" height="1" fill="#0a0a0a"/><rect x="0" y="19" width="3" height="1" fill="#0a0a0a"/><rect x="5" y="19" width="1" height="1" fill="#0a0a0a"/><rect x="11" y="19" width="2" height="1" fill="#0a0a0a"/><rect x="15" y="19" width="2" height="1" fill="#0a0a0a"/><rect x="18" y="19" width="1" height="1" fill="#0a0a0a"/><rect x="21" y="19" width="2" height="1" fill="#0a0a0a"/><rect x="25" y="19" width="1" height="1" fill="#0a0a0a"/><rect x="27" y="19" width="2" height="1" fill="#0a0a0a"/><rect x="30" y="19" width="3" height="1" fill="#0a0a0a"/><rect x="35" y="19" width="1" height="1" fill="#0a0a0a"/><rect x="41" y="19" width="2" height="1" fill="#0a0a0a"/><rect x="45" y="19" width="2" height="1" fill="#0a0a0a"/><rect x="48" y="19" width="1" height="1" fill="#0a0a0a"/><rect x="51" y="19" width="2" height="1" fill="#0a0a0a"/><rect x="55" y="19" width="1" height="1" fill="#0a0a0a"/><rect x="57" y="19" width="2" height="1" fill="#0a0a0a"/><rect x="2" y="20" width="3" height="1" fill="#0a0a0a"/><rect x="6" y="20" width="3" height="1" fill="#0a0a0a"/><rect x="11" y="20" width="3" height="1" fill="#0a0a0a"/><rect x="17" y="20" width="3" height="1" fill="#0a0a0a"/><rect x="24" y="20" width="3" height="1" fill="#0a0a0a"/><rect x="32" y="20" width="3" height="1" fill="#0a0a0a"/><rect x="36" y="20" width="3" height="1" fill="#0a0a0a"/><rect x="41" y="20" width="3" height="1" fill="#0a0a0a"/><rect x="47" y="20" width="3" height="1" fill="#0a0a0a"/><rect x="54" y="20" width="3" height="1" fill="#0a0a0a"/><rect x="1" y="21" width="1" height="1" fill="#0a0a0a"/><rect x="4" y="21" width="1" height="1" fill="#0a0a0a"/><rect x="6" y="21" width="1" height="1" fill="#0a0a0a"/><rect x="9" y="21" width="1" height="1" fill="#0a0a0a"/><rect x="12" y="21" width="3" height="1" fill="#0a0a0a"/><rect x="16" y="21" width="12" height="1" fill="#0a0a0a"/><rect x="31" y="21" width="1" height="1" fill="#0a0a0a"/><rect x="34" y="21" width="1" height="1" fill="#0a0a0a"/><rect x="36" y="21" width="1" height="1" fill="#0a0a0a"/><rect x="39" y="21" width="1" height="1" fill="#0a0a0a"/><rect x="42" y="21" width="3" height="1" fill="#0a0a0a"/><rect x="46" y="21" width="12" height="1" fill="#0a0a0a"/><rect x="0" y="22" width="1" height="1" fill="#0a0a0a"/><rect x="4" y="22" width="1" height="1" fill="#0a0a0a"/><rect x="6" y="22" width="1" height="1" fill="#0a0a0a"/><rect x="10" y="22" width="1" height="1" fill="#0a0a0a"/><rect x="13" y="22" width="2" height="1" fill="#0a0a0a"/><rect x="16" y="22" width="4" height="1" fill="#0a0a0a"/><rect x="21" y="22" width="2" height="1" fill="#0a0a0a"/><rect x="24" y="22" width="4" height="1" fill="#0a0a0a"/><rect x="30" y="22" width="1" height="1" fill="#0a0a0a"/><rect x="34" y="22" width="1" height="1" fill="#0a0a0a"/><rect x="36" y="22" width="1" height="1" fill="#0a0a0a"/><rect x="40" y="22" width="1" height="1" fill="#0a0a0a"/><rect x="43" y="22" width="2" height="1" fill="#0a0a0a"/><rect x="46" y="22" width="4" height="1" fill="#0a0a0a"/><rect x="51" y="22" width="2" height="1" fill="#0a0a0a"/><rect x="54" y="22" width="4" height="1" fill="#0a0a0a"/><rect x="0" y="23" width="1" height="1" fill="#0a0a0a"/><rect x="3" y="23" width="1" height="1" fill="#0a0a0a"/><rect x="7" y="23" width="1" height="1" fill="#0a0a0a"/><rect x="10" y="23" width="1" height="1" fill="#0a0a0a"/><rect x="14" y="23" width="1" height="1" fill="#0a0a0a"/><rect x="17" y="23" width="2" height="1" fill="#0a0a0a"/><rect x="20" y="23" width="4" height="1" fill="#0a0a0a"/><rect x="25" y="23" width="2" height="1" fill="#0a0a0a"/><rect x="30" y="23" width="1" height="1" fill="#0a0a0a"/><rect x="33" y="23" width="1" height="1" fill="#0a0a0a"/><rect x="37" y="23" width="1" height="1" fill="#0a0a0a"/><rect x="40" y="23" width="1" height="1" fill="#0a0a0a"/><rect x="44" y="23" width="1" height="1" fill="#0a0a0a"/><rect x="47" y="23" width="2" height="1" fill="#0a0a0a"/><rect x="50" y="23" width="4" height="1" fill="#0a0a0a"/><rect x="55" y="23" width="2" height="1" fill="#0a0a0a"/><rect x="0" y="24" width="3" height="1" fill="#0a0a0a"/><rect x="8" y="24" width="3" height="1" fill="#0a0a0a"/><rect x="20" y="24" width="4" height="1" fill="#0a0a0a"/><rect x="30" y="24" width="3" height="1" fill="#0a0a0a"/><rect x="38" y="24" width="3" height="1" fill="#0a0a0a"/><rect x="50" y="24" width="4" height="1" fill="#0a0a0a"/><rect x="21" y="25" width="2" height="1" fill="#0a0a0a"/><rect x="51" y="25" width="2" height="1" fill="#0a0a0a"/><rect x="0" y="27" width="60" height="1" fill="#0a0a0a"/><rect x="0" y="29" width="60" height="1" fill="#0a0a0a"/><rect x="3" y="30" width="3" height="1" fill="#0a0a0a"/><rect x="10" y="30" width="5" height="1" fill="#0a0a0a"/><rect x="18" y="30" width="3" height="1" fill="#0a0a0a"/><rect x="25" y="30" width="5" height="1" fill="#0a0a0a"/><rect x="33" y="30" width="3" height="1" fill="#0a0a0a"/><rect x="40" y="30" width="5" height="1" fill="#0a0a0a"/><rect x="48" y="30" width="3" height="1" fill="#0a0a0a"/><rect x="55" y="30" width="5" height="1" fill="#0a0a0a"/><rect x="1" y="31" width="1" height="1" fill="#0a0a0a"/><rect x="3" y="31" width="2" height="1" fill="#0a0a0a"/><rect x="7" y="31" width="2" height="1" fill="#0a0a0a"/><rect x="11" y="31" width="3" height="1" fill="#0a0a0a"/><rect x="16" y="31" width="1" height="1" fill="#0a0a0a"/><rect x="18" y="31" width="2" height="1" fill="#0a0a0a"/><rect x="22" y="31" width="2" height="1" fill="#0a0a0a"/><rect x="26" y="31" width="3" height="1" fill="#0a0a0a"/><rect x="31" y="31" width="1" height="1" fill="#0a0a0a"/><rect x="33" y="31" width="2" height="1" fill="#0a0a0a"/><rect x="37" y="31" width="2" height="1" fill="#0a0a0a"/><rect x="41" y="31" width="3" height="1" fill="#0a0a0a"/><rect x="46" y="31" width="1" height="1" fill="#0a0a0a"/><rect x="48" y="31" width="2" height="1" fill="#0a0a0a"/><rect x="52" y="31" width="2" height="1" fill="#0a0a0a"/><rect x="56" y="31" width="3" height="1" fill="#0a0a0a"/><rect x="0" y="32" width="1" height="1" fill="#0a0a0a"/><rect x="3" y="32" width="1" height="1" fill="#0a0a0a"/><rect x="6" y="32" width="1" height="1" fill="#0a0a0a"/><rect x="9" y="32" width="1" height="1" fill="#0a0a0a"/><rect x="12" y="32" width="1" height="1" fill="#0a0a0a"/><rect x="15" y="32" width="1" height="1" fill="#0a0a0a"/><rect x="18" y="32" width="1" height="1" fill="#0a0a0a"/><rect x="21" y="32" width="1" height="1" fill="#0a0a0a"/><rect x="24" y="32" width="1" height="1" fill="#0a0a0a"/><rect x="27" y="32" width="1" height="1" fill="#0a0a0a"/><rect x="30" y="32" width="1" height="1" fill="#0a0a0a"/><rect x="33" y="32" width="1" height="1" fill="#0a0a0a"/><rect x="36" y="32" width="1" height="1" fill="#0a0a0a"/><rect x="39" y="32" width="1" height="1" fill="#0a0a0a"/><rect x="42" y="32" width="1" height="1" fill="#0a0a0a"/><rect x="45" y="32" width="1" height="1" fill="#0a0a0a"/><rect x="48" y="32" width="1" height="1" fill="#0a0a0a"/><rect x="51" y="32" width="1" height="1" fill="#0a0a0a"/><rect x="54" y="32" width="1" height="1" fill="#0a0a0a"/><rect x="57" y="32" width="1" height="1" fill="#0a0a0a"/><rect x="1" y="33" width="2" height="1" fill="#0a0a0a"/><rect x="5" y="33" width="2" height="1" fill="#0a0a0a"/><rect x="8" y="33" width="1" height="1" fill="#0a0a0a"/><rect x="11" y="33" width="4" height="1" fill="#0a0a0a"/><rect x="16" y="33" width="2" height="1" fill="#0a0a0a"/><rect x="20" y="33" width="2" height="1" fill="#0a0a0a"/><rect x="23" y="33" width="1" height="1" fill="#0a0a0a"/><rect x="26" y="33" width="4" height="1" fill="#0a0a0a"/><rect x="31" y="33" width="2" height="1" fill="#0a0a0a"/><rect x="35" y="33" width="2" height="1" fill="#0a0a0a"/><rect x="38" y="33" width="1" height="1" fill="#0a0a0a"/><rect x="41" y="33" width="4" height="1" fill="#0a0a0a"/><rect x="46" y="33" width="2" height="1" fill="#0a0a0a"/><rect x="50" y="33" width="2" height="1" fill="#0a0a0a"/><rect x="53" y="33" width="1" height="1" fill="#0a0a0a"/><rect x="56" y="33" width="4" height="1" fill="#0a0a0a"/><rect x="4" y="34" width="3" height="1" fill="#0a0a0a"/><rect x="10" y="34" width="5" height="1" fill="#0a0a0a"/><rect x="19" y="34" width="3" height="1" fill="#0a0a0a"/><rect x="25" y="34" width="5" height="1" fill="#0a0a0a"/><rect x="34" y="34" width="3" height="1" fill="#0a0a0a"/><rect x="40" y="34" width="5" height="1" fill="#0a0a0a"/><rect x="49" y="34" width="3" height="1" fill="#0a0a0a"/><rect x="55" y="34" width="5" height="1" fill="#0a0a0a"/><rect x="0" y="35" width="60" height="1" fill="#0a0a0a"/><path d="M0 0V36M1 0V36M2 0V36M3 0V36M4 0V36M5 0V36M6 0V36M7 0V36M8 0V36M9 0V36M10 0V36M11 0V36M12 0V36M13 0V36M14 0V36M15 0V36M16 0V36M17 0V36M18 0V36M19 0V36M20 0V36M21 0V36M22 0V36M23 0V36M24 0V36M25 0V36M26 0V36M27 0V36M28 0V36M29 0V36M30 0V36M31 0V36M32 0V36M33 0V36M34 0V36M35 0V36M36 0V36M37 0V36M38 0V36M39 0V36M40 0V36M41 0V36M42 0V36M43 0V36M44 0V36M45 0V36M46 0V36M47 0V36M48 0V36M49 0V36M50 0V36M51 0V36M52 0V36M53 0V36M54 0V36M55 0V36M56 0V36M57 0V36M58 0V36M59 0V36M60 0V36M0 0H60M0 1H60M0 2H60M0 3H60M0 4H60M0 5H60M0 6H60M0 7H60M0 8H60M0 9H60M0 10H60M0 11H60M0 12H60M0 13H60M0 14H60M0 15H60M0 16H60M0 17H60M0 18H60M0 19H60M0 20H60M0 21H60M0 22H60M0 23H60M0 24H60M0 25H60M0 26H60M0 27H60M0 28H60M0 29H60M0 30H60M0 31H60M0 32H60M0 33H60M0 34H60M0 35H60M0 36H60" stroke="#7d7d7d" stroke-opacity="0.6" stroke-width="0.18" fill="none" shape-rendering="auto"/><rect x="0" y="1" width="3" height="1" fill="#ee3a1c"/><rect x="6" y="1" width="4" height="1" fill="#ee3a1c"/><rect x="15" y="1" width="3" height="1" fill="#ee3a1c"/><rect x="21" y="1" width="4" height="1" fill="#ee3a1c"/><rect x="30" y="1" width="3" height="1" fill="#ee3a1c"/><rect x="36" y="1" width="4" height="1" fill="#ee3a1c"/><rect x="45" y="1" width="3" height="1" fill="#ee3a1c"/><rect x="51" y="1" width="4" height="1" fill="#ee3a1c"/><rect x="0" y="2" width="1" height="1" fill="#ee3a1c"/><rect x="2" y="2" width="1" height="1" fill="#ee3a1c"/><rect x="5" y="2" width="2" height="1" fill="#ee3a1c"/><rect x="9" y="2" width="2" height="1" fill="#ee3a1c"/><rect x="14" y="2" width="2" height="1" fill="#ee3a1c"/><rect x="17" y="2" width="1" height="1" fill="#ee3a1c"/><rect x="20" y="2" width="2" height="1" fill="#ee3a1c"/><rect x="24" y="2" width="2" height="1" fill="#ee3a1c"/><rect x="29" y="2" width="2" height="1" fill="#ee3a1c"/><rect x="32" y="2" width="1" height="1" fill="#ee3a1c"/><rect x="35" y="2" width="2" height="1" fill="#ee3a1c"/><rect x="39" y="2" width="2" height="1" fill="#ee3a1c"/><rect x="44" y="2" width="2" height="1" fill="#ee3a1c"/><rect x="47" y="2" width="1" height="1" fill="#ee3a1c"/><rect x="50" y="2" width="2" height="1" fill="#ee3a1c"/><rect x="54" y="2" width="2" height="1" fill="#ee3a1c"/><rect x="59" y="2" width="1" height="1" fill="#ee3a1c"/><rect x="1" y="3" width="2" height="1" fill="#ee3a1c"/><rect x="4" y="3" width="2" height="1" fill="#ee3a1c"/><rect x="7" y="3" width="2" height="1" fill="#ee3a1c"/><rect x="10" y="3" width="2" height="1" fill="#ee3a1c"/><rect x="13" y="3" width="2" height="1" fill="#ee3a1c"/><rect x="16" y="3" width="2" height="1" fill="#ee3a1c"/><rect x="19" y="3" width="2" height="1" fill="#ee3a1c"/><rect x="22" y="3" width="2" height="1" fill="#ee3a1c"/><rect x="25" y="3" width="2" height="1" fill="#ee3a1c"/><rect x="28" y="3" width="2" height="1" fill="#ee3a1c"/><rect x="31" y="3" width="2" height="1" fill="#ee3a1c"/><rect x="34" y="3" width="2" height="1" fill="#ee3a1c"/><rect x="37" y="3" width="2" height="1" fill="#ee3a1c"/><rect x="40" y="3" width="2" height="1" fill="#ee3a1c"/><rect x="43" y="3" width="2" height="1" fill="#ee3a1c"/><rect x="46" y="3" width="2" height="1" fill="#ee3a1c"/><rect x="49" y="3" width="2" height="1" fill="#ee3a1c"/><rect x="52" y="3" width="2" height="1" fill="#ee3a1c"/><rect x="55" y="3" width="2" height="1" fill="#ee3a1c"/><rect x="58" y="3" width="2" height="1" fill="#ee3a1c"/><rect x="0" y="4" width="1" height="1" fill="#ee3a1c"/><rect x="3" y="4" width="2" height="1" fill="#ee3a1c"/><rect x="7" y="4" width="1" height="1" fill="#ee3a1c"/><rect x="9" y="4" width="2" height="1" fill="#ee3a1c"/><rect x="15" y="4" width="1" height="1" fill="#ee3a1c"/><rect x="18" y="4" width="2" height="1" fill="#ee3a1c"/><rect x="22" y="4" width="1" height="1" fill="#ee3a1c"/><rect x="24" y="4" width="2" height="1" fill="#ee3a1c"/><rect x="30" y="4" width="1" height="1" fill="#ee3a1c"/><rect x="33" y="4" width="2" height="1" fill="#ee3a1c"/><rect x="37" y="4" width="1" height="1" fill="#ee3a1c"/><rect x="39" y="4" width="2" height="1" fill="#ee3a1c"/><rect x="45" y="4" width="1" height="1" fill="#ee3a1c"/><rect x="48" y="4" width="2" height="1" fill="#ee3a1c"/><rect x="52" y="4" width="1" height="1" fill="#ee3a1c"/><rect x="54" y="4" width="2" height="1" fill="#ee3a1c"/><rect x="0" y="5" width="4" height="1" fill="#ee3a1c"/><rect x="7" y="5" width="3" height="1" fill="#ee3a1c"/><rect x="15" y="5" width="4" height="1" fill="#ee3a1c"/><rect x="22" y="5" width="3" height="1" fill="#ee3a1c"/><rect x="30" y="5" width="4" height="1" fill="#ee3a1c"/><rect x="37" y="5" width="3" height="1" fill="#ee3a1c"/><rect x="45" y="5" width="4" height="1" fill="#ee3a1c"/><rect x="52" y="5" width="3" height="1" fill="#ee3a1c"/><rect x="5" y="12" width="2" height="1" fill="#ee3a1c"/><rect x="35" y="12" width="2" height="1" fill="#ee3a1c"/><rect x="5" y="13" width="3" height="1" fill="#ee3a1c"/><rect x="35" y="13" width="3" height="1" fill="#ee3a1c"/><rect x="6" y="14" width="2" height="1" fill="#ee3a1c"/><rect x="36" y="14" width="2" height="1" fill="#ee3a1c"/><rect x="2" y="15" width="2" height="1" fill="#ee3a1c"/><rect x="20" y="15" width="4" height="1" fill="#ee3a1c"/><rect x="32" y="15" width="2" height="1" fill="#ee3a1c"/><rect x="50" y="15" width="4" height="1" fill="#ee3a1c"/><rect x="2" y="16" width="3" height="1" fill="#ee3a1c"/><rect x="19" y="16" width="2" height="1" fill="#ee3a1c"/><rect x="23" y="16" width="2" height="1" fill="#ee3a1c"/><rect x="32" y="16" width="3" height="1" fill="#ee3a1c"/><rect x="49" y="16" width="2" height="1" fill="#ee3a1c"/><rect x="53" y="16" width="2" height="1" fill="#ee3a1c"/><rect x="3" y="17" width="2" height="1" fill="#ee3a1c"/><rect x="19" y="17" width="1" height="1" fill="#ee3a1c"/><rect x="24" y="17" width="1" height="1" fill="#ee3a1c"/><rect x="33" y="17" width="2" height="1" fill="#ee3a1c"/><rect x="49" y="17" width="1" height="1" fill="#ee3a1c"/><rect x="54" y="17" width="1" height="1" fill="#ee3a1c"/><rect x="19" y="18" width="1" height="1" fill="#ee3a1c"/><rect x="24" y="18" width="1" height="1" fill="#ee3a1c"/><rect x="49" y="18" width="1" height="1" fill="#ee3a1c"/><rect x="54" y="18" width="1" height="1" fill="#ee3a1c"/><rect x="19" y="19" width="2" height="1" fill="#ee3a1c"/><rect x="23" y="19" width="2" height="1" fill="#ee3a1c"/><rect x="49" y="19" width="2" height="1" fill="#ee3a1c"/><rect x="53" y="19" width="2" height="1" fill="#ee3a1c"/><rect x="20" y="20" width="4" height="1" fill="#ee3a1c"/><rect x="50" y="20" width="4" height="1" fill="#ee3a1c"/><rect x="2" y="21" width="2" height="1" fill="#ee3a1c"/><rect x="7" y="21" width="2" height="1" fill="#ee3a1c"/><rect x="32" y="21" width="2" height="1" fill="#ee3a1c"/><rect x="37" y="21" width="2" height="1" fill="#ee3a1c"/><rect x="1" y="22" width="3" height="1" fill="#ee3a1c"/><rect x="7" y="22" width="3" height="1" fill="#ee3a1c"/><rect x="31" y="22" width="3" height="1" fill="#ee3a1c"/><rect x="37" y="22" width="3" height="1" fill="#ee3a1c"/><rect x="1" y="23" width="2" height="1" fill="#ee3a1c"/><rect x="8" y="23" width="2" height="1" fill="#ee3a1c"/><rect x="31" y="23" width="2" height="1" fill="#ee3a1c"/><rect x="38" y="23" width="2" height="1" fill="#ee3a1c"/><rect x="0" y="30" width="3" height="1" fill="#ee3a1c"/><rect x="6" y="30" width="4" height="1" fill="#ee3a1c"/><rect x="15" y="30" width="3" height="1" fill="#ee3a1c"/><rect x="21" y="30" width="4" height="1" fill="#ee3a1c"/><rect x="30" y="30" width="3" height="1" fill="#ee3a1c"/><rect x="36" y="30" width="4" height="1" fill="#ee3a1c"/><rect x="45" y="30" width="3" height="1" fill="#ee3a1c"/><rect x="51" y="30" width="4" height="1" fill="#ee3a1c"/><rect x="0" y="31" width="1" height="1" fill="#ee3a1c"/><rect x="2" y="31" width="1" height="1" fill="#ee3a1c"/><rect x="5" y="31" width="2" height="1" fill="#ee3a1c"/><rect x="9" y="31" width="2" height="1" fill="#ee3a1c"/><rect x="14" y="31" width="2" height="1" fill="#ee3a1c"/><rect x="17" y="31" width="1" height="1" fill="#ee3a1c"/><rect x="20" y="31" width="2" height="1" fill="#ee3a1c"/><rect x="24" y="31" width="2" height="1" fill="#ee3a1c"/><rect x="29" y="31" width="2" height="1" fill="#ee3a1c"/><rect x="32" y="31" width="1" height="1" fill="#ee3a1c"/><rect x="35" y="31" width="2" height="1" fill="#ee3a1c"/><rect x="39" y="31" width="2" height="1" fill="#ee3a1c"/><rect x="44" y="31" width="2" height="1" fill="#ee3a1c"/><rect x="47" y="31" width="1" height="1" fill="#ee3a1c"/><rect x="50" y="31" width="2" height="1" fill="#ee3a1c"/><rect x="54" y="31" width="2" height="1" fill="#ee3a1c"/><rect x="59" y="31" width="1" height="1" fill="#ee3a1c"/><rect x="1" y="32" width="2" height="1" fill="#ee3a1c"/><rect x="4" y="32" width="2" height="1" fill="#ee3a1c"/><rect x="7" y="32" width="2" height="1" fill="#ee3a1c"/><rect x="10" y="32" width="2" height="1" fill="#ee3a1c"/><rect x="13" y="32" width="2" height="1" fill="#ee3a1c"/><rect x="16" y="32" width="2" height="1" fill="#ee3a1c"/><rect x="19" y="32" width="2" height="1" fill="#ee3a1c"/><rect x="22" y="32" width="2" height="1" fill="#ee3a1c"/><rect x="25" y="32" width="2" height="1" fill="#ee3a1c"/><rect x="28" y="32" width="2" height="1" fill="#ee3a1c"/><rect x="31" y="32" width="2" height="1" fill="#ee3a1c"/><rect x="34" y="32" width="2" height="1" fill="#ee3a1c"/><rect x="37" y="32" width="2" height="1" fill="#ee3a1c"/><rect x="40" y="32" width="2" height="1" fill="#ee3a1c"/><rect x="43" y="32" width="2" height="1" fill="#ee3a1c"/><rect x="46" y="32" width="2" height="1" fill="#ee3a1c"/><rect x="49" y="32" width="2" height="1" fill="#ee3a1c"/><rect x="52" y="32" width="2" height="1" fill="#ee3a1c"/><rect x="55" y="32" width="2" height="1" fill="#ee3a1c"/><rect x="58" y="32" width="2" height="1" fill="#ee3a1c"/><rect x="0" y="33" width="1" height="1" fill="#ee3a1c"/><rect x="3" y="33" width="2" height="1" fill="#ee3a1c"/><rect x="7" y="33" width="1" height="1" fill="#ee3a1c"/><rect x="9" y="33" width="2" height="1" fill="#ee3a1c"/><rect x="15" y="33" width="1" height="1" fill="#ee3a1c"/><rect x="18" y="33" width="2" height="1" fill="#ee3a1c"/><rect x="22" y="33" width="1" height="1" fill="#ee3a1c"/><rect x="24" y="33" width="2" height="1" fill="#ee3a1c"/><rect x="30" y="33" width="1" height="1" fill="#ee3a1c"/><rect x="33" y="33" width="2" height="1" fill="#ee3a1c"/><rect x="37" y="33" width="1" height="1" fill="#ee3a1c"/><rect x="39" y="33" width="2" height="1" fill="#ee3a1c"/><rect x="45" y="33" width="1" height="1" fill="#ee3a1c"/><rect x="48" y="33" width="2" height="1" fill="#ee3a1c"/><rect x="52" y="33" width="1" height="1" fill="#ee3a1c"/><rect x="54" y="33" width="2" height="1" fill="#ee3a1c"/><rect x="0" y="34" width="4" height="1" fill="#ee3a1c"/><rect x="7" y="34" width="3" height="1" fill="#ee3a1c"/><rect x="15" y="34" width="4" height="1" fill="#ee3a1c"/><rect x="22" y="34" width="3" height="1" fill="#ee3a1c"/><rect x="30" y="34" width="4" height="1" fill="#ee3a1c"/><rect x="37" y="34" width="3" height="1" fill="#ee3a1c"/><rect x="45" y="34" width="4" height="1" fill="#ee3a1c"/><rect x="52" y="34" width="3" height="1" fill="#ee3a1c"/><path d="M0 0V36M1 0V36M2 0V36M3 0V36M4 0V36M5 0V36M6 0V36M7 0V36M8 0V36M9 0V36M10 0V36M11 0V36M12 0V36M13 0V36M14 0V36M15 0V36M16 0V36M17 0V36M18 0V36M19 0V36M20 0V36M21 0V36M22 0V36M23 0V36M24 0V36M25 0V36M26 0V36M27 0V36M28 0V36M29 0V36M30 0V36M31 0V36M32 0V36M33 0V36M34 0V36M35 0V36M36 0V36M37 0V36M38 0V36M39 0V36M40 0V36M41 0V36M42 0V36M43 0V36M44 0V36M45 0V36M46 0V36M47 0V36M48 0V36M49 0V36M50 0V36M51 0V36M52 0V36M53 0V36M54 0V36M55 0V36M56 0V36M57 0V36M58 0V36M59 0V36M60 0V36M0 0H60M0 1H60M0 2H60M0 3H60M0 4H60M0 5H60M0 6H60M0 7H60M0 8H60M0 9H60M0 10H60M0 11H60M0 12H60M0 13H60M0 14H60M0 15H60M0 16H60M0 17H60M0 18H60M0 19H60M0 20H60M0 21H60M0 22H60M0 23H60M0 24H60M0 25H60M0 26H60M0 27H60M0 28H60M0 29H60M0 30H60M0 31H60M0 32H60M0 33H60M0 34H60M0 35H60M0 36H60" stroke="#7d3020" stroke-opacity="0.13" stroke-width="0.18" fill="none" shape-rendering="auto"/></svg>
<!-- notes -->
<div class="a" style="left:240px;top:517.500px;width:961px;height:1px;background:#d0d0d0"></div>
<div class="t" style="left:249.85px;top:525.2px;font-size:12.3px;color:#5c5c5c;letter-spacing:-0.353px" id="notes">Нотатки до слайда</div>
<!-- right scrollbar -->
<div class="a" style="left:1201.500px;top:131px;width:13.500px;height:387px;background:#dcdcdc"></div>
<div class="a" style="left:1202px;top:346.500px;width:12.500px;height:13.500px;background:#fff;border:1px solid #c9c9c9;box-sizing:border-box"></div>
<div class="a" style="left:1202px;top:458px;width:12.500px;height:13px;background:#fff;border:1px solid #c9c9c9;box-sizing:border-box"></div>
<div class="a" style="left:1205.500px;top:463px;width:0;height:0;border-left:3px solid transparent;border-right:3px solid transparent;border-top:4px solid #555"></div>
<svg style="left:1202px;top:474px" width="13" height="26" viewBox="0 0 13 26" fill="#666"><path d="M3.500 5l3-3l3 3zM3.500 8.500l3-3l3 3zM3.500 17.500l3 3l3-3zM3.500 21l3 3l3-3z"/></svg>
<!-- status bar -->
<div class="a" style="left:94px;top:573.500px;width:1121px;height:17.500px;background:#f3f2f1"></div>
<div class="a" style="left:94px;top:590px;width:1121px;height:1px;background:#a9a9a9"></div>
<div class="t" style="left:100.25px;top:578.5px;font-size:9.5px;color:#555;letter-spacing:-0.381px" id="st1">Слайд 35 з 52</div>
<div class="t" style="left:198.5px;top:578.5px;font-size:9.5px;color:#555;letter-spacing:-0.013px" id="st2">англійська (Сполучені Штати)</div>
<div class="t" style="left:796.8px;top:578.5px;font-size:9.5px;color:#555;letter-spacing:0.132px" id="st3">Нотатки</div>
<div class="t" style="left:864px;top:578.5px;font-size:9.5px;color:#555;letter-spacing:0.166px" id="st4">Примітки</div>
<div class="a" style="left:921.500px;top:574px;width:32.500px;height:16px;background:#c8c6c4"></div>
<div class="t" style="left:1171.8px;top:578.5px;font-size:9.5px;color:#555;letter-spacing:-0.472px" id="st5">62%</div>
<svg style="left:94px;top:573px" width="1121" height="18" viewBox="94 573 1121 18" fill="none" stroke="#555" stroke-width="1">
<path d="M174.500 577.500h6v8.500h-6zM176.500 577.500v8.500M182 582.500l4 4.500M186 582.500l-4 4.500" />
<path d="M783 584h10M783 586.500h10M784 581.500h8M786 579l2-1.500l2 1.500"/>
<path d="M850.500 577.500h10.500v7h-6l-2.500 2.500v-2.500h-2z"/>
<path d="M932.500 577.500h10v9.500h-10zM934.500 577.500v9.500M936.500 579.500h4v3h-4zM934.500 585h8"/>
<path d="M965.500 577.500h3.500v3.500h-3.500zM971.500 577.500h3.500v3.500h-3.500zM965.500 583.500h3.500v3.500h-3.500zM971.500 583.500h3.500v3.500h-3.500z"/>
<path d="M997.500 578h10v9h-10zM1002.500 578v9M999 580.500h2M999 582.500h2M999 584.500h2M1004 580.500h2M1004 582.500h2M1004 584.500h2" stroke-width=".9"/>
<path d="M1030.500 577.500h11M1031.500 577.500v6h9v-6M1036 583.500v3.500M1033.500 587.500h5"/>
<path d="M1057.500 582.500h5"/>
<path d="M1068 582.500h82" stroke="#a5a5a5"/>
<path d="M1109.500 580.500v4" stroke="#a5a5a5"/>
<rect x="1091.500" y="578" width="3" height="9" fill="#555" stroke="none"/>
<path d="M1154 582.500h6M1157 579.500v6"/>
<path d="M1202 579.500h6v6h-6zM1205 576.500v2M1205 586.500v2M1199 582.500h2M1209 582.500h2M1203.500 577.500l1.500-1.500l1.500 1.500M1203.500 587.500l1.500 1.500l1.500-1.500M1200 581l-1.500 1.500l1.500 1.500M1210 581l1.500 1.500l-1.500 1.500" stroke-width=".9"/>
</svg>
<!-- webcam tile -->
<svg style="left:963px;top:25px" width="247" height="138" viewBox="0 0 247 138">
<defs>
<clipPath id="wc"><rect x="0" y="0" width="247" height="137.500" rx="10"/></clipPath>
<filter id="bl" x="-10%" y="-10%" width="120%" height="120%"><feGaussianBlur stdDeviation="1.600"/></filter>
<filter id="bl2" x="-10%" y="-10%" width="120%" height="120%"><feGaussianBlur stdDeviation="0.900"/></filter>
<linearGradient id="wall" x1="0" x2="1" y1="0" y2="0"><stop offset="0" stop-color="#ddd7c0"/><stop offset=".5" stop-color="#e4dfca"/><stop offset=".8" stop-color="#eae6d6"/><stop offset="1" stop-color="#e5e0cc"/></linearGradient>
<linearGradient id="vig" x1="0" x2="1" y1="0" y2="0"><stop offset="0" stop-color="#d8d2bc" stop-opacity="0"/><stop offset="1" stop-color="#cfc8b0" stop-opacity=".8"/></linearGradient>
</defs>
<g clip-path="url(#wc)">
<rect width="247" height="138" fill="url(#wall)"/>
<rect x="200" width="47" height="138" fill="url(#vig)"/>
<g filter="url(#bl)">
<!-- shirt right shoulder -->
<path d="M150 82C166 74 186 76 204 84C224 92 240 100 252 110V142H120z" fill="#2a66c4"/>
<path d="M168 78C190 78 215 90 247 108V100C222 84 196 74 172 74z" fill="#4a86da"/>
<!-- shirt left / chest -->
<path d="M44 142C52 118 66 100 92 88L112 112L128 142z" fill="#2763c2"/>
<path d="M62 100C72 92 82 88 92 86L98 96C84 98 74 104 66 110z" fill="#3b78d2"/>
<!-- forearm from bottom-left -->
<path d="M-4 142C-2 118 4 98 18 84C30 72 44 64 56 62C66 62 72 68 76 76C80 84 78 90 70 92C62 94 56 98 50 106C42 118 36 130 30 142z" fill="#c7a08b"/>
<path d="M20 86C32 74 46 68 58 66" stroke="#d6b29c" stroke-width="6" fill="none"/>
<path d="M52 96C60 90 70 90 76 84" stroke="#a9806e" stroke-width="4" fill="none"/>
<path d="M46 112C40 124 38 134 36 142" stroke="#2c2f3c" stroke-width="5" fill="none" opacity=".55"/>
<!-- hair -->
<path d="M82 56C74 26 90-6 122-6C152-6 164 18 160 48C160 60 158 70 154 80L146 60L92 64z" fill="#93713f"/>
<path d="M84 36C88 10 106-2 126-2C146-2 156 12 156 30C140 14 112 12 96 30z" fill="#b18d52"/>
<path d="M150 30C156 44 156 62 152 78" stroke="#7f6238" stroke-width="6" fill="none"/>
<!-- scarf -->
<path d="M92 86C100 100 108 112 118 122H150C158 108 164 92 160 76L150 96H104z" fill="#cdbfc6"/>
<path d="M96 90L112 118" stroke="#79aacd" stroke-width="6"/>
<path d="M104 100L116 120" stroke="#eef0f2" stroke-width="3"/>
<path d="M158 80L150 108" stroke="#d7a7b7" stroke-width="6"/>
<path d="M108 112C118 122 134 126 150 116" stroke="#4a3a40" stroke-width="5" fill="none"/>
<!-- face -->
<path d="M88 48C86 28 98 14 118 12C140 12 152 28 152 52C152 74 144 97 124 97C106 96 91 72 88 48z" fill="#c88f7b"/>
<ellipse cx="119" cy="28" rx="25" ry="12" fill="#d8a88e"/>
<ellipse cx="136" cy="60" rx="12" ry="15" fill="#cf9a85"/>
<ellipse cx="98" cy="62" rx="8" ry="14" fill="#bb8572"/>
<ellipse cx="120" cy="88" rx="14" ry="7" fill="#bf8a77"/>
<!-- fringe -->
<path d="M84 40C86 22 98 8 118 6C136 4 150 12 154 26C140 16 118 14 104 22C96 28 90 34 84 40z" fill="#ab8850"/>
</g>
<g filter="url(#bl2)">
<ellipse cx="95.500" cy="45" rx="5.500" ry="2.600" transform="rotate(-11 95.500 45)" fill="#5d4038"/>
<ellipse cx="122.500" cy="39.500" rx="6" ry="2.800" transform="rotate(-11 122.500 39.500)" fill="#5d4038"/>
<path d="M89 39.500c4-3 9-4 13-3M115 33.500c5-3 11-3 16-1" stroke="#9a7458" stroke-width="2" fill="none"/>
<path d="M109 46c-2 5-5 10-4 14c1 2 4 2.500 7 1.500" stroke="#a87866" stroke-width="2.400" fill="none"/>
<ellipse cx="115" cy="74" rx="8.500" ry="3.300" transform="rotate(-8 115 74)" fill="#94494a"/>
<path d="M109.500 74.300l11-1.600" stroke="#f1e6e0" stroke-width="2.200"/>
<path d="M106 88c6 4 16 4 22-1" stroke="#ab7d6b" stroke-width="2.500" fill="none"/>
</g>
</g>
<rect x="7.300" y="101.700" width="187" height="28" rx="6" fill="#2a2a2a" fill-opacity=".84"/>
<text x="20.900" y="124.100" font-family="Liberation Sans, sans-serif" font-size="21" letter-spacing="0.100" fill="#fff" id="wname">Наталія Кочубей</text>
</svg>
<!-- mic muted badge -->
<svg style="left:117.200px;top:12.700px" width="36.800" height="36.800" viewBox="0 0 36 36.500" preserveAspectRatio="none">
<rect width="36" height="36.500" rx="8" fill="#1c1c1c"/>
<rect x="14" y="7.500" width="8" height="14" rx="4" fill="#e8574f"/>
<path d="M10.500 17a7.500 7.500 0 0 0 15 0M18 24.500v4.500M14 29.500h8" stroke="#e8574f" stroke-width="1.800" fill="none"/>
<path d="M8.500 29L29.500 5.500" stroke="#1c1c1c" stroke-width="4.500"/>
<path d="M8.500 29L29.500 5.500" stroke="#e8574f" stroke-width="1.600"/>
</svg>
<!-- annotate button -->
<svg style="left:73px;top:414px" width="76" height="76" viewBox="0 0 76 76">
<circle cx="38" cy="38" r="36" fill="#3b3b3b" fill-opacity=".86" stroke="#a9a9a9" stroke-width="2"/>
<g transform="translate(36.300 41.200) rotate(50) scale(1.05)">
<path d="M-5-12.500h10v21l-5 7.500l-5-7.500z" fill="#fff"/>
<rect x="-5" y="-19" width="10" height="5" rx="1.500" fill="#fff"/>
</g>
</svg>
<!-- mouse cursor -->
<svg style="left:184.500px;top:494px" width="12" height="17" viewBox="0 0 14 20"><path d="M1 1v14.500l3.500-3.200l2.700 6l2.200-1l-2.700-5.800h4.800z" fill="#fff" stroke="#222" stroke-width="1"/></svg>
</body>
</html>
